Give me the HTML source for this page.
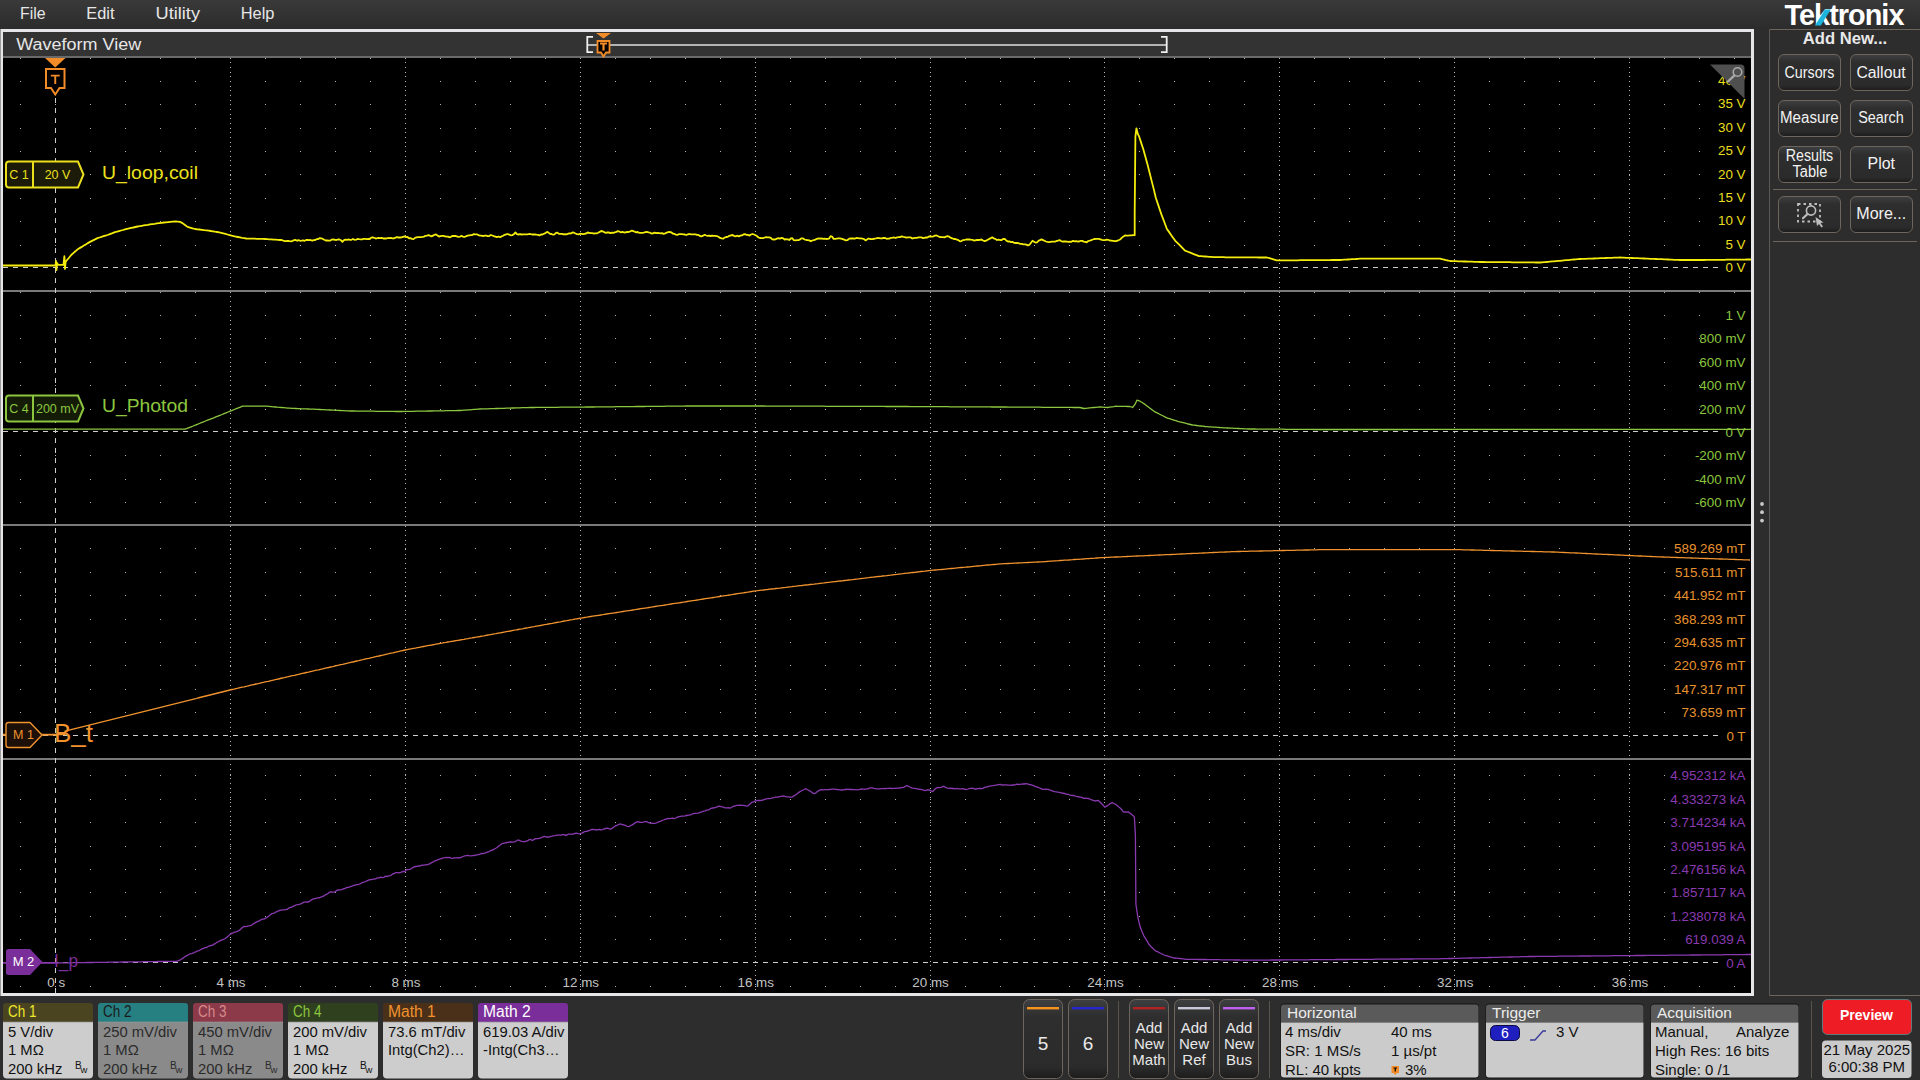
<!DOCTYPE html><html><head><meta charset="utf-8"><style>html,body{margin:0;padding:0;width:1920px;height:1080px;overflow:hidden;background:#2d2d2d}.a{position:absolute}svg text{font-family:"Liberation Sans",sans-serif}</style></head><body><svg class="a" style="left:0;top:0" width="1920" height="1080"><defs><linearGradient id="btn" x1="0" y1="0" x2="0" y2="1"><stop offset="0" stop-color="#3e3f41"/><stop offset="0.22" stop-color="#2e2e2e"/><stop offset="0.85" stop-color="#2b2b2b"/><stop offset="1" stop-color="#1c1c1c"/></linearGradient><linearGradient id="menu" x1="0" y1="0" x2="0" y2="1"><stop offset="0" stop-color="#393939"/><stop offset="1" stop-color="#2c2c2c"/></linearGradient></defs><rect x="0" y="0" width="1920" height="1080" fill="#2d2d2d"/><rect x="0" y="0" width="1920" height="29" fill="url(#menu)"/><text x="20.00" y="19.47" font-size="15.6" fill="#e6e6e6" textLength="25.5" lengthAdjust="spacingAndGlyphs">File</text><text x="86.25" y="19.47" font-size="15.6" fill="#e6e6e6" textLength="28.25" lengthAdjust="spacingAndGlyphs">Edit</text><text x="155.50" y="19.47" font-size="15.6" fill="#e6e6e6" textLength="44.5" lengthAdjust="spacingAndGlyphs">Utility</text><text x="240.75" y="19.47" font-size="15.6" fill="#e6e6e6" textLength="33.75" lengthAdjust="spacingAndGlyphs">Help</text><rect x="0" y="29" width="1754" height="967" fill="#e6e6e8"/><rect x="0" y="29" width="1" height="967" fill="#9a9a9a"/><rect x="3" y="32" width="1748" height="24" fill="#333333"/><rect x="3" y="56" width="1748" height="2" fill="#6a6a6a"/><text x="16.25" y="49.95" font-size="17.3" fill="#e6e6e6" textLength="125" lengthAdjust="spacingAndGlyphs">Waveform View</text><rect x="587" y="44" width="580" height="2" fill="#b4b4b4"/><path d="M593 36.8 H587.3 V52.2 H593" fill="none" stroke="#f0f0f0" stroke-width="1.8"/><path d="M1161 36.8 H1166.7 V52.2 H1161" fill="none" stroke="#f0f0f0" stroke-width="1.8"/><path d="M596 33 H611 L603.5 38.5 Z" fill="#f28c28"/><path d="M597.5 41 H609.5 V52.5 H606 L603.5 56.5 L601 52.5 H597.5 Z" fill="#000" stroke="#f28c28" stroke-width="1.8"/><path d="M600 43.5 H607 M603.5 43.5 V50.5" stroke="#f28c28" stroke-width="2.2"/><path d="M1769.5 995.5 V29.5" fill="none" stroke="#5c5a58" stroke-width="1"/><path d="M1769.5 29.5 H1920" fill="none" stroke="#6e655c" stroke-width="1"/><path d="M1769.5 995.5 H1920" fill="none" stroke="#6e655c" stroke-width="1"/><text x="1784.50" y="25.32" font-size="30" fill="#ffffff" textLength="119" lengthAdjust="spacingAndGlyphs" font-weight="bold" letter-spacing="-1">Tektronix</text><path d="M1815 25.6 L1820.8 25.6 L1830.8 9.4 L1825 9.4 Z" fill="#1cb4dc"/><text x="1845.00" y="44.11" font-size="16.3" fill="#e8e8e8" text-anchor="middle" textLength="84.5" lengthAdjust="spacingAndGlyphs" font-weight="bold">Add New...</text><rect x="1778.5" y="54.5" width="62" height="36" rx="5.5" fill="url(#btn)" stroke="#6e655c" stroke-width="1"/><rect x="1850.5" y="54.5" width="62" height="36" rx="5.5" fill="url(#btn)" stroke="#6e655c" stroke-width="1"/><rect x="1778.5" y="100.5" width="62" height="36" rx="5.5" fill="url(#btn)" stroke="#6e655c" stroke-width="1"/><rect x="1850.5" y="100.5" width="62" height="36" rx="5.5" fill="url(#btn)" stroke="#6e655c" stroke-width="1"/><rect x="1778.5" y="146.5" width="62" height="36" rx="5.5" fill="url(#btn)" stroke="#6e655c" stroke-width="1"/><rect x="1850.5" y="146.5" width="62" height="36" rx="5.5" fill="url(#btn)" stroke="#6e655c" stroke-width="1"/><rect x="1778.5" y="196.5" width="62" height="36" rx="5.5" fill="url(#btn)" stroke="#6e655c" stroke-width="1"/><rect x="1850.5" y="196.5" width="62" height="36" rx="5.5" fill="url(#btn)" stroke="#6e655c" stroke-width="1"/><rect x="1773" y="189" width="144" height="1" fill="#6e655c"/><rect x="1773" y="241" width="144" height="1" fill="#6e655c"/><text x="1809.50" y="77.50" font-size="16" fill="#f2f2f2" text-anchor="middle" textLength="50" lengthAdjust="spacingAndGlyphs">Cursors</text><text x="1881.00" y="77.50" font-size="16" fill="#f2f2f2" text-anchor="middle" textLength="49.25" lengthAdjust="spacingAndGlyphs">Callout</text><text x="1809.40" y="122.90" font-size="16" fill="#f2f2f2" text-anchor="middle" textLength="58.75" lengthAdjust="spacingAndGlyphs">Measure</text><text x="1881.00" y="122.90" font-size="16" fill="#f2f2f2" text-anchor="middle" textLength="45.75" lengthAdjust="spacingAndGlyphs">Search</text><text x="1809.50" y="161.10" font-size="16" fill="#f2f2f2" text-anchor="middle" textLength="47.5" lengthAdjust="spacingAndGlyphs">Results</text><text x="1810.00" y="176.60" font-size="16" fill="#f2f2f2" text-anchor="middle" textLength="35" lengthAdjust="spacingAndGlyphs">Table</text><text x="1881.25" y="168.60" font-size="16" fill="#f2f2f2" text-anchor="middle" textLength="27.5" lengthAdjust="spacingAndGlyphs">Plot</text><text x="1881.25" y="218.60" font-size="16" fill="#f2f2f2" text-anchor="middle" textLength="50" lengthAdjust="spacingAndGlyphs">More...</text><rect x="1798" y="204" width="22" height="17.5" fill="none" stroke="#bdbdbd" stroke-width="1.8" stroke-dasharray="2.5 3"/><circle cx="1811" cy="210.5" r="4.6" fill="none" stroke="#bdbdbd" stroke-width="1.6"/><line x1="1807.5" y1="214" x2="1803" y2="218.2" stroke="#bdbdbd" stroke-width="2.2" stroke-linecap="round"/><path d="M1815.5 217 L1823.5 222.5 L1820.5 223 L1823 226.5 L1821.5 227.5 L1819 224 L1817 226 Z" fill="#bdbdbd"/><path d="M6 1003 H90 Q93 1003 93 1006 V1022 H3 V1006 Q3 1003 6 1003 Z" fill="#4a4420"/><path d="M3 1022 H93 V1074.5 Q93 1078.5 89 1078.5 H7 Q3 1078.5 3 1074.5 Z" fill="#cdcdcd"/><rect x="3" y="1021.5" width="90" height="1.2" fill="#9a9a9a" opacity="0.6"/><text x="8.00" y="1017.17" font-size="15.6" fill="#f0e82a" textLength="28.5" lengthAdjust="spacingAndGlyphs">Ch 1</text><text x="8.00" y="1036.59" font-size="14.8" fill="#111">5 V/div</text><text x="8.00" y="1055.39" font-size="14.8" fill="#111">1 MΩ</text><text x="8.00" y="1074.19" font-size="14.8" fill="#111">200 kHz</text><text x="75.00" y="1069.44" font-size="10" fill="#111">B</text><text x="80.50" y="1072.77" font-size="9.5" fill="#111">w</text><path d="M101 1003 H185 Q188 1003 188 1006 V1022 H98 V1006 Q98 1003 101 1003 Z" fill="#267f80"/><path d="M98 1022 H188 V1074.5 Q188 1078.5 184 1078.5 H102 Q98 1078.5 98 1074.5 Z" fill="#8a8a8a"/><rect x="98" y="1021.5" width="90" height="1.2" fill="#9a9a9a" opacity="0.6"/><text x="103.00" y="1017.17" font-size="15.6" fill="#1a1a1a" textLength="28.5" lengthAdjust="spacingAndGlyphs">Ch 2</text><text x="103.00" y="1036.59" font-size="14.8" fill="#2a2a2a">250 mV/div</text><text x="103.00" y="1055.39" font-size="14.8" fill="#2a2a2a">1 MΩ</text><text x="103.00" y="1074.19" font-size="14.8" fill="#2a2a2a">200 kHz</text><text x="170.00" y="1069.44" font-size="10" fill="#2a2a2a">B</text><text x="175.50" y="1072.77" font-size="9.5" fill="#2a2a2a">w</text><path d="M196 1003 H280 Q283 1003 283 1006 V1022 H193 V1006 Q193 1003 196 1003 Z" fill="#8c3a4a"/><path d="M193 1022 H283 V1074.5 Q283 1078.5 279 1078.5 H197 Q193 1078.5 193 1074.5 Z" fill="#8a8a8a"/><rect x="193" y="1021.5" width="90" height="1.2" fill="#9a9a9a" opacity="0.6"/><text x="198.00" y="1017.17" font-size="15.6" fill="#d88a8a" textLength="28.5" lengthAdjust="spacingAndGlyphs">Ch 3</text><text x="198.00" y="1036.59" font-size="14.8" fill="#2a2a2a">450 mV/div</text><text x="198.00" y="1055.39" font-size="14.8" fill="#2a2a2a">1 MΩ</text><text x="198.00" y="1074.19" font-size="14.8" fill="#2a2a2a">200 kHz</text><text x="265.00" y="1069.44" font-size="10" fill="#2a2a2a">B</text><text x="270.50" y="1072.77" font-size="9.5" fill="#2a2a2a">w</text><path d="M291 1003 H375 Q378 1003 378 1006 V1022 H288 V1006 Q288 1003 291 1003 Z" fill="#2f401e"/><path d="M288 1022 H378 V1074.5 Q378 1078.5 374 1078.5 H292 Q288 1078.5 288 1074.5 Z" fill="#cdcdcd"/><rect x="288" y="1021.5" width="90" height="1.2" fill="#9a9a9a" opacity="0.6"/><text x="293.00" y="1017.17" font-size="15.6" fill="#8cc63f" textLength="28.5" lengthAdjust="spacingAndGlyphs">Ch 4</text><text x="293.00" y="1036.59" font-size="14.8" fill="#111">200 mV/div</text><text x="293.00" y="1055.39" font-size="14.8" fill="#111">1 MΩ</text><text x="293.00" y="1074.19" font-size="14.8" fill="#111">200 kHz</text><text x="360.00" y="1069.44" font-size="10" fill="#111">B</text><text x="365.50" y="1072.77" font-size="9.5" fill="#111">w</text><path d="M386 1003 H470 Q473 1003 473 1006 V1022 H383 V1006 Q383 1003 386 1003 Z" fill="#4a3018"/><path d="M383 1022 H473 V1074.5 Q473 1078.5 469 1078.5 H387 Q383 1078.5 383 1074.5 Z" fill="#cdcdcd"/><rect x="383" y="1021.5" width="90" height="1.2" fill="#9a9a9a" opacity="0.6"/><text x="388.00" y="1017.17" font-size="15.6" fill="#f0922e" textLength="47.8" lengthAdjust="spacingAndGlyphs">Math 1</text><text x="388.00" y="1036.59" font-size="14.8" fill="#111">73.6 mT/div</text><text x="388.00" y="1055.39" font-size="14.8" fill="#111">Intg(Ch2)…</text><path d="M481 1003 H565 Q568 1003 568 1006 V1022 H478 V1006 Q478 1003 481 1003 Z" fill="#7a2e9a"/><path d="M478 1022 H568 V1074.5 Q568 1078.5 564 1078.5 H482 Q478 1078.5 478 1074.5 Z" fill="#cdcdcd"/><rect x="478" y="1021.5" width="90" height="1.2" fill="#9a9a9a" opacity="0.6"/><text x="483.00" y="1017.17" font-size="15.6" fill="#ffffff" textLength="47.8" lengthAdjust="spacingAndGlyphs">Math 2</text><text x="483.00" y="1036.59" font-size="14.8" fill="#111">619.03 A/div</text><text x="483.00" y="1055.39" font-size="14.8" fill="#111">-Intg(Ch3…</text><rect x="1023.5" y="999.5" width="39" height="79" rx="6" fill="url(#btn)" stroke="#6e655c" stroke-width="1"/><rect x="1027" y="1007" width="32" height="2.4" fill="#f7941e"/><rect x="1068.5" y="999.5" width="39" height="79" rx="6" fill="url(#btn)" stroke="#6e655c" stroke-width="1"/><rect x="1072" y="1007" width="32" height="2.4" fill="#2626d0"/><rect x="1129.5" y="999.5" width="39" height="79" rx="6" fill="url(#btn)" stroke="#6e655c" stroke-width="1"/><rect x="1133" y="1007" width="32" height="2.4" fill="#b22222"/><rect x="1174.5" y="999.5" width="39" height="79" rx="6" fill="url(#btn)" stroke="#6e655c" stroke-width="1"/><rect x="1178" y="1007" width="32" height="2.4" fill="#c8c8d8"/><rect x="1219.5" y="999.5" width="39" height="79" rx="6" fill="url(#btn)" stroke="#6e655c" stroke-width="1"/><rect x="1223" y="1007" width="32" height="2.4" fill="#c060f0"/><rect x="1118" y="1001" width="1" height="77" fill="#5a544e"/><rect x="1269" y="1001" width="1" height="77" fill="#5a544e"/><rect x="1811" y="1001" width="1" height="77" fill="#5a544e"/><text x="1043.00" y="1049.54" font-size="19" fill="#e8e8e8" text-anchor="middle">5</text><text x="1088.00" y="1049.54" font-size="19" fill="#e8e8e8" text-anchor="middle">6</text><text x="1149.00" y="1032.66" font-size="15" fill="#e8e8e8" text-anchor="middle">Add</text><text x="1149.00" y="1048.76" font-size="15" fill="#e8e8e8" text-anchor="middle">New</text><text x="1149.00" y="1064.86" font-size="15" fill="#e8e8e8" text-anchor="middle">Math</text><text x="1194.00" y="1032.66" font-size="15" fill="#e8e8e8" text-anchor="middle">Add</text><text x="1194.00" y="1048.76" font-size="15" fill="#e8e8e8" text-anchor="middle">New</text><text x="1194.00" y="1064.86" font-size="15" fill="#e8e8e8" text-anchor="middle">Ref</text><text x="1239.00" y="1032.66" font-size="15" fill="#e8e8e8" text-anchor="middle">Add</text><text x="1239.00" y="1048.76" font-size="15" fill="#e8e8e8" text-anchor="middle">New</text><text x="1239.00" y="1064.86" font-size="15" fill="#e8e8e8" text-anchor="middle">Bus</text><rect x="1280.5" y="1003.5" width="198.5" height="75" rx="4" fill="#151515"/><path d="M1284 1004.5 H1475.5 Q1478.5 1004.5 1478.5 1007.5 V1022.5 H1281 V1007.5 Q1281 1004.5 1284 1004.5 Z" fill="#5a5a5a"/><path d="M1281 1022.5 H1478.5 V1074.5 Q1478.5 1077.5 1475.5 1077.5 H1284 Q1281 1077.5 1281 1074.5 Z" fill="#cbcbcb"/><text x="1287.00" y="1017.83" font-size="15.5" fill="#ececec">Horizontal</text><rect x="1485.5" y="1003.5" width="158.5" height="75" rx="4" fill="#151515"/><path d="M1489 1004.5 H1640.5 Q1643.5 1004.5 1643.5 1007.5 V1022.5 H1486 V1007.5 Q1486 1004.5 1489 1004.5 Z" fill="#5a5a5a"/><path d="M1486 1022.5 H1643.5 V1074.5 Q1643.5 1077.5 1640.5 1077.5 H1489 Q1486 1077.5 1486 1074.5 Z" fill="#cbcbcb"/><text x="1492.00" y="1017.83" font-size="15.5" fill="#ececec">Trigger</text><rect x="1650.5" y="1003.5" width="148.5" height="75" rx="4" fill="#151515"/><path d="M1654 1004.5 H1795.5 Q1798.5 1004.5 1798.5 1007.5 V1022.5 H1651 V1007.5 Q1651 1004.5 1654 1004.5 Z" fill="#5a5a5a"/><path d="M1651 1022.5 H1798.5 V1074.5 Q1798.5 1077.5 1795.5 1077.5 H1654 Q1651 1077.5 1651 1074.5 Z" fill="#cbcbcb"/><text x="1657.00" y="1017.83" font-size="15.5" fill="#ececec">Acquisition</text><text x="1285.00" y="1036.66" font-size="15" fill="#111111">4 ms/div</text><text x="1391.00" y="1036.66" font-size="15" fill="#111111">40 ms</text><text x="1285.00" y="1055.66" font-size="15" fill="#111111">SR: 1 MS/s</text><text x="1391.00" y="1055.66" font-size="15" fill="#111111">1 µs/pt</text><text x="1285.00" y="1074.66" font-size="15" fill="#111111">RL: 40 kpts</text><path d="M1391.5 1066 H1399 V1073 H1397 L1395.25 1075 L1393.5 1073 H1391.5 Z" fill="#f28c28"/><path d="M1393.5 1068 H1397 M1395.25 1068 V1071.5" stroke="#000" stroke-width="1.2"/><text x="1405.00" y="1074.66" font-size="15" fill="#111111">3%</text><rect x="1490.5" y="1025.5" width="29" height="15" rx="5" fill="#1f1fbf" stroke="#0a0a40" stroke-width="1"/><text x="1505.00" y="1037.82" font-size="14" fill="#ffffff" text-anchor="middle">6</text><path d="M1530 1040 H1535 L1543 1031 H1546" fill="none" stroke="#3a3a9a" stroke-width="1.3"/><text x="1556.00" y="1036.66" font-size="15" fill="#111111">3 V</text><text x="1655.00" y="1036.66" font-size="15" fill="#111111">Manual,</text><text x="1736.00" y="1036.66" font-size="15" fill="#111111">Analyze</text><text x="1655.00" y="1055.66" font-size="15" fill="#111111">High Res: 16 bits</text><text x="1655.00" y="1074.66" font-size="15" fill="#111111">Single: 0 /1</text><rect x="1822.5" y="999.5" width="89" height="35" rx="5" fill="#ee1c25" stroke="#5f7a7a" stroke-width="1"/><text x="1866.50" y="1020.32" font-size="14" fill="#ffffff" text-anchor="middle" font-weight="bold">Preview</text><rect x="1822" y="1040.5" width="89.5" height="37.5" rx="4" fill="#cbcbcb"/><text x="1866.75" y="1055.16" font-size="15" fill="#111111" text-anchor="middle">21 May 2025</text><text x="1866.75" y="1071.66" font-size="15" fill="#111111" text-anchor="middle">6:00:38 PM</text><rect x="3" y="58" width="1748" height="935" fill="#000"/><path d="M20 58h1 M55 58h1 M90 58h1 M125 58h1 M160 58h1 M195 58h1 M230 58h1 M265 58h1 M300 58h1 M335 58h1 M370 58h1 M405 58h1 M440 58h1 M475 58h1 M510 58h1 M545 58h1 M580 58h1 M615 58h1 M650 58h1 M685 58h1 M720 58h1 M755 58h1 M790 58h1 M825 58h1 M860 58h1 M895 58h1 M930 58h1 M965 58h1 M1000 58h1 M1034 58h1 M1069 58h1 M1104 58h1 M1139 58h1 M1174 58h1 M1209 58h1 M1244 58h1 M1279 58h1 M1314 58h1 M1349 58h1 M1384 58h1 M1419 58h1 M1454 58h1 M1489 58h1 M1524 58h1 M1559 58h1 M1594 58h1 M1629 58h1 M1664 58h1 M1699 58h1 M1734 58h1 M20 81h1 M55 81h1 M90 81h1 M125 81h1 M160 81h1 M195 81h1 M230 81h1 M265 81h1 M300 81h1 M335 81h1 M370 81h1 M405 81h1 M440 81h1 M475 81h1 M510 81h1 M545 81h1 M580 81h1 M615 81h1 M650 81h1 M685 81h1 M720 81h1 M755 81h1 M790 81h1 M825 81h1 M860 81h1 M895 81h1 M930 81h1 M965 81h1 M1000 81h1 M1034 81h1 M1069 81h1 M1104 81h1 M1139 81h1 M1174 81h1 M1209 81h1 M1244 81h1 M1279 81h1 M1314 81h1 M1349 81h1 M1384 81h1 M1419 81h1 M1454 81h1 M1489 81h1 M1524 81h1 M1559 81h1 M1594 81h1 M1629 81h1 M1664 81h1 M1699 81h1 M1734 81h1 M20 104h1 M55 104h1 M90 104h1 M125 104h1 M160 104h1 M195 104h1 M230 104h1 M265 104h1 M300 104h1 M335 104h1 M370 104h1 M405 104h1 M440 104h1 M475 104h1 M510 104h1 M545 104h1 M580 104h1 M615 104h1 M650 104h1 M685 104h1 M720 104h1 M755 104h1 M790 104h1 M825 104h1 M860 104h1 M895 104h1 M930 104h1 M965 104h1 M1000 104h1 M1034 104h1 M1069 104h1 M1104 104h1 M1139 104h1 M1174 104h1 M1209 104h1 M1244 104h1 M1279 104h1 M1314 104h1 M1349 104h1 M1384 104h1 M1419 104h1 M1454 104h1 M1489 104h1 M1524 104h1 M1559 104h1 M1594 104h1 M1629 104h1 M1664 104h1 M1699 104h1 M1734 104h1 M20 128h1 M55 128h1 M90 128h1 M125 128h1 M160 128h1 M195 128h1 M230 128h1 M265 128h1 M300 128h1 M335 128h1 M370 128h1 M405 128h1 M440 128h1 M475 128h1 M510 128h1 M545 128h1 M580 128h1 M615 128h1 M650 128h1 M685 128h1 M720 128h1 M755 128h1 M790 128h1 M825 128h1 M860 128h1 M895 128h1 M930 128h1 M965 128h1 M1000 128h1 M1034 128h1 M1069 128h1 M1104 128h1 M1139 128h1 M1174 128h1 M1209 128h1 M1244 128h1 M1279 128h1 M1314 128h1 M1349 128h1 M1384 128h1 M1419 128h1 M1454 128h1 M1489 128h1 M1524 128h1 M1559 128h1 M1594 128h1 M1629 128h1 M1664 128h1 M1699 128h1 M1734 128h1 M20 151h1 M55 151h1 M90 151h1 M125 151h1 M160 151h1 M195 151h1 M230 151h1 M265 151h1 M300 151h1 M335 151h1 M370 151h1 M405 151h1 M440 151h1 M475 151h1 M510 151h1 M545 151h1 M580 151h1 M615 151h1 M650 151h1 M685 151h1 M720 151h1 M755 151h1 M790 151h1 M825 151h1 M860 151h1 M895 151h1 M930 151h1 M965 151h1 M1000 151h1 M1034 151h1 M1069 151h1 M1104 151h1 M1139 151h1 M1174 151h1 M1209 151h1 M1244 151h1 M1279 151h1 M1314 151h1 M1349 151h1 M1384 151h1 M1419 151h1 M1454 151h1 M1489 151h1 M1524 151h1 M1559 151h1 M1594 151h1 M1629 151h1 M1664 151h1 M1699 151h1 M1734 151h1 M20 174h1 M55 174h1 M90 174h1 M125 174h1 M160 174h1 M195 174h1 M230 174h1 M265 174h1 M300 174h1 M335 174h1 M370 174h1 M405 174h1 M440 174h1 M475 174h1 M510 174h1 M545 174h1 M580 174h1 M615 174h1 M650 174h1 M685 174h1 M720 174h1 M755 174h1 M790 174h1 M825 174h1 M860 174h1 M895 174h1 M930 174h1 M965 174h1 M1000 174h1 M1034 174h1 M1069 174h1 M1104 174h1 M1139 174h1 M1174 174h1 M1209 174h1 M1244 174h1 M1279 174h1 M1314 174h1 M1349 174h1 M1384 174h1 M1419 174h1 M1454 174h1 M1489 174h1 M1524 174h1 M1559 174h1 M1594 174h1 M1629 174h1 M1664 174h1 M1699 174h1 M1734 174h1 M20 198h1 M55 198h1 M90 198h1 M125 198h1 M160 198h1 M195 198h1 M230 198h1 M265 198h1 M300 198h1 M335 198h1 M370 198h1 M405 198h1 M440 198h1 M475 198h1 M510 198h1 M545 198h1 M580 198h1 M615 198h1 M650 198h1 M685 198h1 M720 198h1 M755 198h1 M790 198h1 M825 198h1 M860 198h1 M895 198h1 M930 198h1 M965 198h1 M1000 198h1 M1034 198h1 M1069 198h1 M1104 198h1 M1139 198h1 M1174 198h1 M1209 198h1 M1244 198h1 M1279 198h1 M1314 198h1 M1349 198h1 M1384 198h1 M1419 198h1 M1454 198h1 M1489 198h1 M1524 198h1 M1559 198h1 M1594 198h1 M1629 198h1 M1664 198h1 M1699 198h1 M1734 198h1 M20 221h1 M55 221h1 M90 221h1 M125 221h1 M160 221h1 M195 221h1 M230 221h1 M265 221h1 M300 221h1 M335 221h1 M370 221h1 M405 221h1 M440 221h1 M475 221h1 M510 221h1 M545 221h1 M580 221h1 M615 221h1 M650 221h1 M685 221h1 M720 221h1 M755 221h1 M790 221h1 M825 221h1 M860 221h1 M895 221h1 M930 221h1 M965 221h1 M1000 221h1 M1034 221h1 M1069 221h1 M1104 221h1 M1139 221h1 M1174 221h1 M1209 221h1 M1244 221h1 M1279 221h1 M1314 221h1 M1349 221h1 M1384 221h1 M1419 221h1 M1454 221h1 M1489 221h1 M1524 221h1 M1559 221h1 M1594 221h1 M1629 221h1 M1664 221h1 M1699 221h1 M1734 221h1 M20 245h1 M55 245h1 M90 245h1 M125 245h1 M160 245h1 M195 245h1 M230 245h1 M265 245h1 M300 245h1 M335 245h1 M370 245h1 M405 245h1 M440 245h1 M475 245h1 M510 245h1 M545 245h1 M580 245h1 M615 245h1 M650 245h1 M685 245h1 M720 245h1 M755 245h1 M790 245h1 M825 245h1 M860 245h1 M895 245h1 M930 245h1 M965 245h1 M1000 245h1 M1034 245h1 M1069 245h1 M1104 245h1 M1139 245h1 M1174 245h1 M1209 245h1 M1244 245h1 M1279 245h1 M1314 245h1 M1349 245h1 M1384 245h1 M1419 245h1 M1454 245h1 M1489 245h1 M1524 245h1 M1559 245h1 M1594 245h1 M1629 245h1 M1664 245h1 M1699 245h1 M1734 245h1 M20 292h1 M55 292h1 M90 292h1 M125 292h1 M160 292h1 M195 292h1 M230 292h1 M265 292h1 M300 292h1 M335 292h1 M370 292h1 M405 292h1 M440 292h1 M475 292h1 M510 292h1 M545 292h1 M580 292h1 M615 292h1 M650 292h1 M685 292h1 M720 292h1 M755 292h1 M790 292h1 M825 292h1 M860 292h1 M895 292h1 M930 292h1 M965 292h1 M1000 292h1 M1034 292h1 M1069 292h1 M1104 292h1 M1139 292h1 M1174 292h1 M1209 292h1 M1244 292h1 M1279 292h1 M1314 292h1 M1349 292h1 M1384 292h1 M1419 292h1 M1454 292h1 M1489 292h1 M1524 292h1 M1559 292h1 M1594 292h1 M1629 292h1 M1664 292h1 M1699 292h1 M1734 292h1 M20 315h1 M55 315h1 M90 315h1 M125 315h1 M160 315h1 M195 315h1 M230 315h1 M265 315h1 M300 315h1 M335 315h1 M370 315h1 M405 315h1 M440 315h1 M475 315h1 M510 315h1 M545 315h1 M580 315h1 M615 315h1 M650 315h1 M685 315h1 M720 315h1 M755 315h1 M790 315h1 M825 315h1 M860 315h1 M895 315h1 M930 315h1 M965 315h1 M1000 315h1 M1034 315h1 M1069 315h1 M1104 315h1 M1139 315h1 M1174 315h1 M1209 315h1 M1244 315h1 M1279 315h1 M1314 315h1 M1349 315h1 M1384 315h1 M1419 315h1 M1454 315h1 M1489 315h1 M1524 315h1 M1559 315h1 M1594 315h1 M1629 315h1 M1664 315h1 M1699 315h1 M1734 315h1 M20 338h1 M55 338h1 M90 338h1 M125 338h1 M160 338h1 M195 338h1 M230 338h1 M265 338h1 M300 338h1 M335 338h1 M370 338h1 M405 338h1 M440 338h1 M475 338h1 M510 338h1 M545 338h1 M580 338h1 M615 338h1 M650 338h1 M685 338h1 M720 338h1 M755 338h1 M790 338h1 M825 338h1 M860 338h1 M895 338h1 M930 338h1 M965 338h1 M1000 338h1 M1034 338h1 M1069 338h1 M1104 338h1 M1139 338h1 M1174 338h1 M1209 338h1 M1244 338h1 M1279 338h1 M1314 338h1 M1349 338h1 M1384 338h1 M1419 338h1 M1454 338h1 M1489 338h1 M1524 338h1 M1559 338h1 M1594 338h1 M1629 338h1 M1664 338h1 M1699 338h1 M1734 338h1 M20 362h1 M55 362h1 M90 362h1 M125 362h1 M160 362h1 M195 362h1 M230 362h1 M265 362h1 M300 362h1 M335 362h1 M370 362h1 M405 362h1 M440 362h1 M475 362h1 M510 362h1 M545 362h1 M580 362h1 M615 362h1 M650 362h1 M685 362h1 M720 362h1 M755 362h1 M790 362h1 M825 362h1 M860 362h1 M895 362h1 M930 362h1 M965 362h1 M1000 362h1 M1034 362h1 M1069 362h1 M1104 362h1 M1139 362h1 M1174 362h1 M1209 362h1 M1244 362h1 M1279 362h1 M1314 362h1 M1349 362h1 M1384 362h1 M1419 362h1 M1454 362h1 M1489 362h1 M1524 362h1 M1559 362h1 M1594 362h1 M1629 362h1 M1664 362h1 M1699 362h1 M1734 362h1 M20 385h1 M55 385h1 M90 385h1 M125 385h1 M160 385h1 M195 385h1 M230 385h1 M265 385h1 M300 385h1 M335 385h1 M370 385h1 M405 385h1 M440 385h1 M475 385h1 M510 385h1 M545 385h1 M580 385h1 M615 385h1 M650 385h1 M685 385h1 M720 385h1 M755 385h1 M790 385h1 M825 385h1 M860 385h1 M895 385h1 M930 385h1 M965 385h1 M1000 385h1 M1034 385h1 M1069 385h1 M1104 385h1 M1139 385h1 M1174 385h1 M1209 385h1 M1244 385h1 M1279 385h1 M1314 385h1 M1349 385h1 M1384 385h1 M1419 385h1 M1454 385h1 M1489 385h1 M1524 385h1 M1559 385h1 M1594 385h1 M1629 385h1 M1664 385h1 M1699 385h1 M1734 385h1 M20 409h1 M55 409h1 M90 409h1 M125 409h1 M160 409h1 M195 409h1 M230 409h1 M265 409h1 M300 409h1 M335 409h1 M370 409h1 M405 409h1 M440 409h1 M475 409h1 M510 409h1 M545 409h1 M580 409h1 M615 409h1 M650 409h1 M685 409h1 M720 409h1 M755 409h1 M790 409h1 M825 409h1 M860 409h1 M895 409h1 M930 409h1 M965 409h1 M1000 409h1 M1034 409h1 M1069 409h1 M1104 409h1 M1139 409h1 M1174 409h1 M1209 409h1 M1244 409h1 M1279 409h1 M1314 409h1 M1349 409h1 M1384 409h1 M1419 409h1 M1454 409h1 M1489 409h1 M1524 409h1 M1559 409h1 M1594 409h1 M1629 409h1 M1664 409h1 M1699 409h1 M1734 409h1 M20 455h1 M55 455h1 M90 455h1 M125 455h1 M160 455h1 M195 455h1 M230 455h1 M265 455h1 M300 455h1 M335 455h1 M370 455h1 M405 455h1 M440 455h1 M475 455h1 M510 455h1 M545 455h1 M580 455h1 M615 455h1 M650 455h1 M685 455h1 M720 455h1 M755 455h1 M790 455h1 M825 455h1 M860 455h1 M895 455h1 M930 455h1 M965 455h1 M1000 455h1 M1034 455h1 M1069 455h1 M1104 455h1 M1139 455h1 M1174 455h1 M1209 455h1 M1244 455h1 M1279 455h1 M1314 455h1 M1349 455h1 M1384 455h1 M1419 455h1 M1454 455h1 M1489 455h1 M1524 455h1 M1559 455h1 M1594 455h1 M1629 455h1 M1664 455h1 M1699 455h1 M1734 455h1 M20 479h1 M55 479h1 M90 479h1 M125 479h1 M160 479h1 M195 479h1 M230 479h1 M265 479h1 M300 479h1 M335 479h1 M370 479h1 M405 479h1 M440 479h1 M475 479h1 M510 479h1 M545 479h1 M580 479h1 M615 479h1 M650 479h1 M685 479h1 M720 479h1 M755 479h1 M790 479h1 M825 479h1 M860 479h1 M895 479h1 M930 479h1 M965 479h1 M1000 479h1 M1034 479h1 M1069 479h1 M1104 479h1 M1139 479h1 M1174 479h1 M1209 479h1 M1244 479h1 M1279 479h1 M1314 479h1 M1349 479h1 M1384 479h1 M1419 479h1 M1454 479h1 M1489 479h1 M1524 479h1 M1559 479h1 M1594 479h1 M1629 479h1 M1664 479h1 M1699 479h1 M1734 479h1 M20 502h1 M55 502h1 M90 502h1 M125 502h1 M160 502h1 M195 502h1 M230 502h1 M265 502h1 M300 502h1 M335 502h1 M370 502h1 M405 502h1 M440 502h1 M475 502h1 M510 502h1 M545 502h1 M580 502h1 M615 502h1 M650 502h1 M685 502h1 M720 502h1 M755 502h1 M790 502h1 M825 502h1 M860 502h1 M895 502h1 M930 502h1 M965 502h1 M1000 502h1 M1034 502h1 M1069 502h1 M1104 502h1 M1139 502h1 M1174 502h1 M1209 502h1 M1244 502h1 M1279 502h1 M1314 502h1 M1349 502h1 M1384 502h1 M1419 502h1 M1454 502h1 M1489 502h1 M1524 502h1 M1559 502h1 M1594 502h1 M1629 502h1 M1664 502h1 M1699 502h1 M1734 502h1 M20 525h1 M55 525h1 M90 525h1 M125 525h1 M160 525h1 M195 525h1 M230 525h1 M265 525h1 M300 525h1 M335 525h1 M370 525h1 M405 525h1 M440 525h1 M475 525h1 M510 525h1 M545 525h1 M580 525h1 M615 525h1 M650 525h1 M685 525h1 M720 525h1 M755 525h1 M790 525h1 M825 525h1 M860 525h1 M895 525h1 M930 525h1 M965 525h1 M1000 525h1 M1034 525h1 M1069 525h1 M1104 525h1 M1139 525h1 M1174 525h1 M1209 525h1 M1244 525h1 M1279 525h1 M1314 525h1 M1349 525h1 M1384 525h1 M1419 525h1 M1454 525h1 M1489 525h1 M1524 525h1 M1559 525h1 M1594 525h1 M1629 525h1 M1664 525h1 M1699 525h1 M1734 525h1 M20 548h1 M55 548h1 M90 548h1 M125 548h1 M160 548h1 M195 548h1 M230 548h1 M265 548h1 M300 548h1 M335 548h1 M370 548h1 M405 548h1 M440 548h1 M475 548h1 M510 548h1 M545 548h1 M580 548h1 M615 548h1 M650 548h1 M685 548h1 M720 548h1 M755 548h1 M790 548h1 M825 548h1 M860 548h1 M895 548h1 M930 548h1 M965 548h1 M1000 548h1 M1034 548h1 M1069 548h1 M1104 548h1 M1139 548h1 M1174 548h1 M1209 548h1 M1244 548h1 M1279 548h1 M1314 548h1 M1349 548h1 M1384 548h1 M1419 548h1 M1454 548h1 M1489 548h1 M1524 548h1 M1559 548h1 M1594 548h1 M1629 548h1 M1664 548h1 M1699 548h1 M1734 548h1 M20 572h1 M55 572h1 M90 572h1 M125 572h1 M160 572h1 M195 572h1 M230 572h1 M265 572h1 M300 572h1 M335 572h1 M370 572h1 M405 572h1 M440 572h1 M475 572h1 M510 572h1 M545 572h1 M580 572h1 M615 572h1 M650 572h1 M685 572h1 M720 572h1 M755 572h1 M790 572h1 M825 572h1 M860 572h1 M895 572h1 M930 572h1 M965 572h1 M1000 572h1 M1034 572h1 M1069 572h1 M1104 572h1 M1139 572h1 M1174 572h1 M1209 572h1 M1244 572h1 M1279 572h1 M1314 572h1 M1349 572h1 M1384 572h1 M1419 572h1 M1454 572h1 M1489 572h1 M1524 572h1 M1559 572h1 M1594 572h1 M1629 572h1 M1664 572h1 M1699 572h1 M1734 572h1 M20 595h1 M55 595h1 M90 595h1 M125 595h1 M160 595h1 M195 595h1 M230 595h1 M265 595h1 M300 595h1 M335 595h1 M370 595h1 M405 595h1 M440 595h1 M475 595h1 M510 595h1 M545 595h1 M580 595h1 M615 595h1 M650 595h1 M685 595h1 M720 595h1 M755 595h1 M790 595h1 M825 595h1 M860 595h1 M895 595h1 M930 595h1 M965 595h1 M1000 595h1 M1034 595h1 M1069 595h1 M1104 595h1 M1139 595h1 M1174 595h1 M1209 595h1 M1244 595h1 M1279 595h1 M1314 595h1 M1349 595h1 M1384 595h1 M1419 595h1 M1454 595h1 M1489 595h1 M1524 595h1 M1559 595h1 M1594 595h1 M1629 595h1 M1664 595h1 M1699 595h1 M1734 595h1 M20 619h1 M55 619h1 M90 619h1 M125 619h1 M160 619h1 M195 619h1 M230 619h1 M265 619h1 M300 619h1 M335 619h1 M370 619h1 M405 619h1 M440 619h1 M475 619h1 M510 619h1 M545 619h1 M580 619h1 M615 619h1 M650 619h1 M685 619h1 M720 619h1 M755 619h1 M790 619h1 M825 619h1 M860 619h1 M895 619h1 M930 619h1 M965 619h1 M1000 619h1 M1034 619h1 M1069 619h1 M1104 619h1 M1139 619h1 M1174 619h1 M1209 619h1 M1244 619h1 M1279 619h1 M1314 619h1 M1349 619h1 M1384 619h1 M1419 619h1 M1454 619h1 M1489 619h1 M1524 619h1 M1559 619h1 M1594 619h1 M1629 619h1 M1664 619h1 M1699 619h1 M1734 619h1 M20 642h1 M55 642h1 M90 642h1 M125 642h1 M160 642h1 M195 642h1 M230 642h1 M265 642h1 M300 642h1 M335 642h1 M370 642h1 M405 642h1 M440 642h1 M475 642h1 M510 642h1 M545 642h1 M580 642h1 M615 642h1 M650 642h1 M685 642h1 M720 642h1 M755 642h1 M790 642h1 M825 642h1 M860 642h1 M895 642h1 M930 642h1 M965 642h1 M1000 642h1 M1034 642h1 M1069 642h1 M1104 642h1 M1139 642h1 M1174 642h1 M1209 642h1 M1244 642h1 M1279 642h1 M1314 642h1 M1349 642h1 M1384 642h1 M1419 642h1 M1454 642h1 M1489 642h1 M1524 642h1 M1559 642h1 M1594 642h1 M1629 642h1 M1664 642h1 M1699 642h1 M1734 642h1 M20 665h1 M55 665h1 M90 665h1 M125 665h1 M160 665h1 M195 665h1 M230 665h1 M265 665h1 M300 665h1 M335 665h1 M370 665h1 M405 665h1 M440 665h1 M475 665h1 M510 665h1 M545 665h1 M580 665h1 M615 665h1 M650 665h1 M685 665h1 M720 665h1 M755 665h1 M790 665h1 M825 665h1 M860 665h1 M895 665h1 M930 665h1 M965 665h1 M1000 665h1 M1034 665h1 M1069 665h1 M1104 665h1 M1139 665h1 M1174 665h1 M1209 665h1 M1244 665h1 M1279 665h1 M1314 665h1 M1349 665h1 M1384 665h1 M1419 665h1 M1454 665h1 M1489 665h1 M1524 665h1 M1559 665h1 M1594 665h1 M1629 665h1 M1664 665h1 M1699 665h1 M1734 665h1 M20 689h1 M55 689h1 M90 689h1 M125 689h1 M160 689h1 M195 689h1 M230 689h1 M265 689h1 M300 689h1 M335 689h1 M370 689h1 M405 689h1 M440 689h1 M475 689h1 M510 689h1 M545 689h1 M580 689h1 M615 689h1 M650 689h1 M685 689h1 M720 689h1 M755 689h1 M790 689h1 M825 689h1 M860 689h1 M895 689h1 M930 689h1 M965 689h1 M1000 689h1 M1034 689h1 M1069 689h1 M1104 689h1 M1139 689h1 M1174 689h1 M1209 689h1 M1244 689h1 M1279 689h1 M1314 689h1 M1349 689h1 M1384 689h1 M1419 689h1 M1454 689h1 M1489 689h1 M1524 689h1 M1559 689h1 M1594 689h1 M1629 689h1 M1664 689h1 M1699 689h1 M1734 689h1 M20 712h1 M55 712h1 M90 712h1 M125 712h1 M160 712h1 M195 712h1 M230 712h1 M265 712h1 M300 712h1 M335 712h1 M370 712h1 M405 712h1 M440 712h1 M475 712h1 M510 712h1 M545 712h1 M580 712h1 M615 712h1 M650 712h1 M685 712h1 M720 712h1 M755 712h1 M790 712h1 M825 712h1 M860 712h1 M895 712h1 M930 712h1 M965 712h1 M1000 712h1 M1034 712h1 M1069 712h1 M1104 712h1 M1139 712h1 M1174 712h1 M1209 712h1 M1244 712h1 M1279 712h1 M1314 712h1 M1349 712h1 M1384 712h1 M1419 712h1 M1454 712h1 M1489 712h1 M1524 712h1 M1559 712h1 M1594 712h1 M1629 712h1 M1664 712h1 M1699 712h1 M1734 712h1 M20 775h1 M55 775h1 M90 775h1 M125 775h1 M160 775h1 M195 775h1 M230 775h1 M265 775h1 M300 775h1 M335 775h1 M370 775h1 M405 775h1 M440 775h1 M475 775h1 M510 775h1 M545 775h1 M580 775h1 M615 775h1 M650 775h1 M685 775h1 M720 775h1 M755 775h1 M790 775h1 M825 775h1 M860 775h1 M895 775h1 M930 775h1 M965 775h1 M1000 775h1 M1034 775h1 M1069 775h1 M1104 775h1 M1139 775h1 M1174 775h1 M1209 775h1 M1244 775h1 M1279 775h1 M1314 775h1 M1349 775h1 M1384 775h1 M1419 775h1 M1454 775h1 M1489 775h1 M1524 775h1 M1559 775h1 M1594 775h1 M1629 775h1 M1664 775h1 M1699 775h1 M1734 775h1 M20 799h1 M55 799h1 M90 799h1 M125 799h1 M160 799h1 M195 799h1 M230 799h1 M265 799h1 M300 799h1 M335 799h1 M370 799h1 M405 799h1 M440 799h1 M475 799h1 M510 799h1 M545 799h1 M580 799h1 M615 799h1 M650 799h1 M685 799h1 M720 799h1 M755 799h1 M790 799h1 M825 799h1 M860 799h1 M895 799h1 M930 799h1 M965 799h1 M1000 799h1 M1034 799h1 M1069 799h1 M1104 799h1 M1139 799h1 M1174 799h1 M1209 799h1 M1244 799h1 M1279 799h1 M1314 799h1 M1349 799h1 M1384 799h1 M1419 799h1 M1454 799h1 M1489 799h1 M1524 799h1 M1559 799h1 M1594 799h1 M1629 799h1 M1664 799h1 M1699 799h1 M1734 799h1 M20 822h1 M55 822h1 M90 822h1 M125 822h1 M160 822h1 M195 822h1 M230 822h1 M265 822h1 M300 822h1 M335 822h1 M370 822h1 M405 822h1 M440 822h1 M475 822h1 M510 822h1 M545 822h1 M580 822h1 M615 822h1 M650 822h1 M685 822h1 M720 822h1 M755 822h1 M790 822h1 M825 822h1 M860 822h1 M895 822h1 M930 822h1 M965 822h1 M1000 822h1 M1034 822h1 M1069 822h1 M1104 822h1 M1139 822h1 M1174 822h1 M1209 822h1 M1244 822h1 M1279 822h1 M1314 822h1 M1349 822h1 M1384 822h1 M1419 822h1 M1454 822h1 M1489 822h1 M1524 822h1 M1559 822h1 M1594 822h1 M1629 822h1 M1664 822h1 M1699 822h1 M1734 822h1 M20 846h1 M55 846h1 M90 846h1 M125 846h1 M160 846h1 M195 846h1 M230 846h1 M265 846h1 M300 846h1 M335 846h1 M370 846h1 M405 846h1 M440 846h1 M475 846h1 M510 846h1 M545 846h1 M580 846h1 M615 846h1 M650 846h1 M685 846h1 M720 846h1 M755 846h1 M790 846h1 M825 846h1 M860 846h1 M895 846h1 M930 846h1 M965 846h1 M1000 846h1 M1034 846h1 M1069 846h1 M1104 846h1 M1139 846h1 M1174 846h1 M1209 846h1 M1244 846h1 M1279 846h1 M1314 846h1 M1349 846h1 M1384 846h1 M1419 846h1 M1454 846h1 M1489 846h1 M1524 846h1 M1559 846h1 M1594 846h1 M1629 846h1 M1664 846h1 M1699 846h1 M1734 846h1 M20 869h1 M55 869h1 M90 869h1 M125 869h1 M160 869h1 M195 869h1 M230 869h1 M265 869h1 M300 869h1 M335 869h1 M370 869h1 M405 869h1 M440 869h1 M475 869h1 M510 869h1 M545 869h1 M580 869h1 M615 869h1 M650 869h1 M685 869h1 M720 869h1 M755 869h1 M790 869h1 M825 869h1 M860 869h1 M895 869h1 M930 869h1 M965 869h1 M1000 869h1 M1034 869h1 M1069 869h1 M1104 869h1 M1139 869h1 M1174 869h1 M1209 869h1 M1244 869h1 M1279 869h1 M1314 869h1 M1349 869h1 M1384 869h1 M1419 869h1 M1454 869h1 M1489 869h1 M1524 869h1 M1559 869h1 M1594 869h1 M1629 869h1 M1664 869h1 M1699 869h1 M1734 869h1 M20 892h1 M55 892h1 M90 892h1 M125 892h1 M160 892h1 M195 892h1 M230 892h1 M265 892h1 M300 892h1 M335 892h1 M370 892h1 M405 892h1 M440 892h1 M475 892h1 M510 892h1 M545 892h1 M580 892h1 M615 892h1 M650 892h1 M685 892h1 M720 892h1 M755 892h1 M790 892h1 M825 892h1 M860 892h1 M895 892h1 M930 892h1 M965 892h1 M1000 892h1 M1034 892h1 M1069 892h1 M1104 892h1 M1139 892h1 M1174 892h1 M1209 892h1 M1244 892h1 M1279 892h1 M1314 892h1 M1349 892h1 M1384 892h1 M1419 892h1 M1454 892h1 M1489 892h1 M1524 892h1 M1559 892h1 M1594 892h1 M1629 892h1 M1664 892h1 M1699 892h1 M1734 892h1 M20 916h1 M55 916h1 M90 916h1 M125 916h1 M160 916h1 M195 916h1 M230 916h1 M265 916h1 M300 916h1 M335 916h1 M370 916h1 M405 916h1 M440 916h1 M475 916h1 M510 916h1 M545 916h1 M580 916h1 M615 916h1 M650 916h1 M685 916h1 M720 916h1 M755 916h1 M790 916h1 M825 916h1 M860 916h1 M895 916h1 M930 916h1 M965 916h1 M1000 916h1 M1034 916h1 M1069 916h1 M1104 916h1 M1139 916h1 M1174 916h1 M1209 916h1 M1244 916h1 M1279 916h1 M1314 916h1 M1349 916h1 M1384 916h1 M1419 916h1 M1454 916h1 M1489 916h1 M1524 916h1 M1559 916h1 M1594 916h1 M1629 916h1 M1664 916h1 M1699 916h1 M1734 916h1 M20 939h1 M55 939h1 M90 939h1 M125 939h1 M160 939h1 M195 939h1 M230 939h1 M265 939h1 M300 939h1 M335 939h1 M370 939h1 M405 939h1 M440 939h1 M475 939h1 M510 939h1 M545 939h1 M580 939h1 M615 939h1 M650 939h1 M685 939h1 M720 939h1 M755 939h1 M790 939h1 M825 939h1 M860 939h1 M895 939h1 M930 939h1 M965 939h1 M1000 939h1 M1034 939h1 M1069 939h1 M1104 939h1 M1139 939h1 M1174 939h1 M1209 939h1 M1244 939h1 M1279 939h1 M1314 939h1 M1349 939h1 M1384 939h1 M1419 939h1 M1454 939h1 M1489 939h1 M1524 939h1 M1559 939h1 M1594 939h1 M1629 939h1 M1664 939h1 M1699 939h1 M1734 939h1 M20 986h1 M55 986h1 M90 986h1 M125 986h1 M160 986h1 M195 986h1 M230 986h1 M265 986h1 M300 986h1 M335 986h1 M370 986h1 M405 986h1 M440 986h1 M475 986h1 M510 986h1 M545 986h1 M580 986h1 M615 986h1 M650 986h1 M685 986h1 M720 986h1 M755 986h1 M790 986h1 M825 986h1 M860 986h1 M895 986h1 M930 986h1 M965 986h1 M1000 986h1 M1034 986h1 M1069 986h1 M1104 986h1 M1139 986h1 M1174 986h1 M1209 986h1 M1244 986h1 M1279 986h1 M1314 986h1 M1349 986h1 M1384 986h1 M1419 986h1 M1454 986h1 M1489 986h1 M1524 986h1 M1559 986h1 M1594 986h1 M1629 986h1 M1664 986h1 M1699 986h1 M1734 986h1" stroke="#b4b4b4" stroke-width="1" shape-rendering="crispEdges" transform="translate(0,0.5)"/><path d="M230 58v1 M230 62v1 M230 67v1 M230 72v1 M230 76v1 M230 81v1 M230 86v1 M230 90v1 M230 95v1 M230 100v1 M230 104v1 M230 109v1 M230 114v1 M230 118v1 M230 123v1 M230 128v1 M230 132v1 M230 137v1 M230 142v1 M230 146v1 M230 151v1 M230 156v1 M230 160v1 M230 165v1 M230 170v1 M230 175v1 M230 179v1 M230 184v1 M230 189v1 M230 193v1 M230 198v1 M230 203v1 M230 207v1 M230 212v1 M230 217v1 M230 221v1 M230 226v1 M230 231v1 M230 235v1 M230 240v1 M230 245v1 M230 249v1 M230 254v1 M230 259v1 M230 263v1 M230 268v1 M230 273v1 M230 277v1 M230 282v1 M230 287v1 M230 292v1 M230 296v1 M230 301v1 M230 306v1 M230 310v1 M230 315v1 M230 320v1 M230 324v1 M230 329v1 M230 334v1 M230 338v1 M230 343v1 M230 348v1 M230 352v1 M230 357v1 M230 362v1 M230 366v1 M230 371v1 M230 376v1 M230 380v1 M230 385v1 M230 390v1 M230 394v1 M230 399v1 M230 404v1 M230 409v1 M230 413v1 M230 418v1 M230 423v1 M230 427v1 M230 432v1 M230 437v1 M230 441v1 M230 446v1 M230 451v1 M230 455v1 M230 460v1 M230 465v1 M230 469v1 M230 474v1 M230 479v1 M230 483v1 M230 488v1 M230 493v1 M230 497v1 M230 502v1 M230 507v1 M230 511v1 M230 516v1 M230 521v1 M230 526v1 M230 530v1 M230 535v1 M230 540v1 M230 544v1 M230 549v1 M230 554v1 M230 558v1 M230 563v1 M230 568v1 M230 572v1 M230 577v1 M230 582v1 M230 586v1 M230 591v1 M230 596v1 M230 600v1 M230 605v1 M230 610v1 M230 614v1 M230 619v1 M230 624v1 M230 628v1 M230 633v1 M230 638v1 M230 642v1 M230 647v1 M230 652v1 M230 657v1 M230 661v1 M230 666v1 M230 671v1 M230 675v1 M230 680v1 M230 685v1 M230 689v1 M230 694v1 M230 699v1 M230 703v1 M230 708v1 M230 713v1 M230 717v1 M230 722v1 M230 727v1 M230 731v1 M230 736v1 M230 741v1 M230 745v1 M230 750v1 M230 755v1 M230 759v1 M230 764v1 M230 769v1 M230 774v1 M230 778v1 M230 783v1 M230 788v1 M230 792v1 M230 797v1 M230 802v1 M230 806v1 M230 811v1 M230 816v1 M230 820v1 M230 825v1 M230 830v1 M230 834v1 M230 839v1 M230 844v1 M230 848v1 M230 853v1 M230 858v1 M230 862v1 M230 867v1 M230 872v1 M230 876v1 M230 881v1 M230 886v1 M230 891v1 M230 895v1 M230 900v1 M230 905v1 M230 909v1 M230 914v1 M230 919v1 M230 923v1 M230 928v1 M230 933v1 M230 937v1 M230 942v1 M230 947v1 M230 951v1 M230 956v1 M230 961v1 M230 965v1 M230 970v1 M230 975v1 M230 979v1 M230 984v1 M230 989v1 M405 58v1 M405 62v1 M405 67v1 M405 72v1 M405 76v1 M405 81v1 M405 86v1 M405 90v1 M405 95v1 M405 100v1 M405 104v1 M405 109v1 M405 114v1 M405 118v1 M405 123v1 M405 128v1 M405 132v1 M405 137v1 M405 142v1 M405 146v1 M405 151v1 M405 156v1 M405 160v1 M405 165v1 M405 170v1 M405 175v1 M405 179v1 M405 184v1 M405 189v1 M405 193v1 M405 198v1 M405 203v1 M405 207v1 M405 212v1 M405 217v1 M405 221v1 M405 226v1 M405 231v1 M405 235v1 M405 240v1 M405 245v1 M405 249v1 M405 254v1 M405 259v1 M405 263v1 M405 268v1 M405 273v1 M405 277v1 M405 282v1 M405 287v1 M405 292v1 M405 296v1 M405 301v1 M405 306v1 M405 310v1 M405 315v1 M405 320v1 M405 324v1 M405 329v1 M405 334v1 M405 338v1 M405 343v1 M405 348v1 M405 352v1 M405 357v1 M405 362v1 M405 366v1 M405 371v1 M405 376v1 M405 380v1 M405 385v1 M405 390v1 M405 394v1 M405 399v1 M405 404v1 M405 409v1 M405 413v1 M405 418v1 M405 423v1 M405 427v1 M405 432v1 M405 437v1 M405 441v1 M405 446v1 M405 451v1 M405 455v1 M405 460v1 M405 465v1 M405 469v1 M405 474v1 M405 479v1 M405 483v1 M405 488v1 M405 493v1 M405 497v1 M405 502v1 M405 507v1 M405 511v1 M405 516v1 M405 521v1 M405 526v1 M405 530v1 M405 535v1 M405 540v1 M405 544v1 M405 549v1 M405 554v1 M405 558v1 M405 563v1 M405 568v1 M405 572v1 M405 577v1 M405 582v1 M405 586v1 M405 591v1 M405 596v1 M405 600v1 M405 605v1 M405 610v1 M405 614v1 M405 619v1 M405 624v1 M405 628v1 M405 633v1 M405 638v1 M405 642v1 M405 647v1 M405 652v1 M405 657v1 M405 661v1 M405 666v1 M405 671v1 M405 675v1 M405 680v1 M405 685v1 M405 689v1 M405 694v1 M405 699v1 M405 703v1 M405 708v1 M405 713v1 M405 717v1 M405 722v1 M405 727v1 M405 731v1 M405 736v1 M405 741v1 M405 745v1 M405 750v1 M405 755v1 M405 759v1 M405 764v1 M405 769v1 M405 774v1 M405 778v1 M405 783v1 M405 788v1 M405 792v1 M405 797v1 M405 802v1 M405 806v1 M405 811v1 M405 816v1 M405 820v1 M405 825v1 M405 830v1 M405 834v1 M405 839v1 M405 844v1 M405 848v1 M405 853v1 M405 858v1 M405 862v1 M405 867v1 M405 872v1 M405 876v1 M405 881v1 M405 886v1 M405 891v1 M405 895v1 M405 900v1 M405 905v1 M405 909v1 M405 914v1 M405 919v1 M405 923v1 M405 928v1 M405 933v1 M405 937v1 M405 942v1 M405 947v1 M405 951v1 M405 956v1 M405 961v1 M405 965v1 M405 970v1 M405 975v1 M405 979v1 M405 984v1 M405 989v1 M580 58v1 M580 62v1 M580 67v1 M580 72v1 M580 76v1 M580 81v1 M580 86v1 M580 90v1 M580 95v1 M580 100v1 M580 104v1 M580 109v1 M580 114v1 M580 118v1 M580 123v1 M580 128v1 M580 132v1 M580 137v1 M580 142v1 M580 146v1 M580 151v1 M580 156v1 M580 160v1 M580 165v1 M580 170v1 M580 175v1 M580 179v1 M580 184v1 M580 189v1 M580 193v1 M580 198v1 M580 203v1 M580 207v1 M580 212v1 M580 217v1 M580 221v1 M580 226v1 M580 231v1 M580 235v1 M580 240v1 M580 245v1 M580 249v1 M580 254v1 M580 259v1 M580 263v1 M580 268v1 M580 273v1 M580 277v1 M580 282v1 M580 287v1 M580 292v1 M580 296v1 M580 301v1 M580 306v1 M580 310v1 M580 315v1 M580 320v1 M580 324v1 M580 329v1 M580 334v1 M580 338v1 M580 343v1 M580 348v1 M580 352v1 M580 357v1 M580 362v1 M580 366v1 M580 371v1 M580 376v1 M580 380v1 M580 385v1 M580 390v1 M580 394v1 M580 399v1 M580 404v1 M580 409v1 M580 413v1 M580 418v1 M580 423v1 M580 427v1 M580 432v1 M580 437v1 M580 441v1 M580 446v1 M580 451v1 M580 455v1 M580 460v1 M580 465v1 M580 469v1 M580 474v1 M580 479v1 M580 483v1 M580 488v1 M580 493v1 M580 497v1 M580 502v1 M580 507v1 M580 511v1 M580 516v1 M580 521v1 M580 526v1 M580 530v1 M580 535v1 M580 540v1 M580 544v1 M580 549v1 M580 554v1 M580 558v1 M580 563v1 M580 568v1 M580 572v1 M580 577v1 M580 582v1 M580 586v1 M580 591v1 M580 596v1 M580 600v1 M580 605v1 M580 610v1 M580 614v1 M580 619v1 M580 624v1 M580 628v1 M580 633v1 M580 638v1 M580 642v1 M580 647v1 M580 652v1 M580 657v1 M580 661v1 M580 666v1 M580 671v1 M580 675v1 M580 680v1 M580 685v1 M580 689v1 M580 694v1 M580 699v1 M580 703v1 M580 708v1 M580 713v1 M580 717v1 M580 722v1 M580 727v1 M580 731v1 M580 736v1 M580 741v1 M580 745v1 M580 750v1 M580 755v1 M580 759v1 M580 764v1 M580 769v1 M580 774v1 M580 778v1 M580 783v1 M580 788v1 M580 792v1 M580 797v1 M580 802v1 M580 806v1 M580 811v1 M580 816v1 M580 820v1 M580 825v1 M580 830v1 M580 834v1 M580 839v1 M580 844v1 M580 848v1 M580 853v1 M580 858v1 M580 862v1 M580 867v1 M580 872v1 M580 876v1 M580 881v1 M580 886v1 M580 891v1 M580 895v1 M580 900v1 M580 905v1 M580 909v1 M580 914v1 M580 919v1 M580 923v1 M580 928v1 M580 933v1 M580 937v1 M580 942v1 M580 947v1 M580 951v1 M580 956v1 M580 961v1 M580 965v1 M580 970v1 M580 975v1 M580 979v1 M580 984v1 M580 989v1 M755 58v1 M755 62v1 M755 67v1 M755 72v1 M755 76v1 M755 81v1 M755 86v1 M755 90v1 M755 95v1 M755 100v1 M755 104v1 M755 109v1 M755 114v1 M755 118v1 M755 123v1 M755 128v1 M755 132v1 M755 137v1 M755 142v1 M755 146v1 M755 151v1 M755 156v1 M755 160v1 M755 165v1 M755 170v1 M755 175v1 M755 179v1 M755 184v1 M755 189v1 M755 193v1 M755 198v1 M755 203v1 M755 207v1 M755 212v1 M755 217v1 M755 221v1 M755 226v1 M755 231v1 M755 235v1 M755 240v1 M755 245v1 M755 249v1 M755 254v1 M755 259v1 M755 263v1 M755 268v1 M755 273v1 M755 277v1 M755 282v1 M755 287v1 M755 292v1 M755 296v1 M755 301v1 M755 306v1 M755 310v1 M755 315v1 M755 320v1 M755 324v1 M755 329v1 M755 334v1 M755 338v1 M755 343v1 M755 348v1 M755 352v1 M755 357v1 M755 362v1 M755 366v1 M755 371v1 M755 376v1 M755 380v1 M755 385v1 M755 390v1 M755 394v1 M755 399v1 M755 404v1 M755 409v1 M755 413v1 M755 418v1 M755 423v1 M755 427v1 M755 432v1 M755 437v1 M755 441v1 M755 446v1 M755 451v1 M755 455v1 M755 460v1 M755 465v1 M755 469v1 M755 474v1 M755 479v1 M755 483v1 M755 488v1 M755 493v1 M755 497v1 M755 502v1 M755 507v1 M755 511v1 M755 516v1 M755 521v1 M755 526v1 M755 530v1 M755 535v1 M755 540v1 M755 544v1 M755 549v1 M755 554v1 M755 558v1 M755 563v1 M755 568v1 M755 572v1 M755 577v1 M755 582v1 M755 586v1 M755 591v1 M755 596v1 M755 600v1 M755 605v1 M755 610v1 M755 614v1 M755 619v1 M755 624v1 M755 628v1 M755 633v1 M755 638v1 M755 642v1 M755 647v1 M755 652v1 M755 657v1 M755 661v1 M755 666v1 M755 671v1 M755 675v1 M755 680v1 M755 685v1 M755 689v1 M755 694v1 M755 699v1 M755 703v1 M755 708v1 M755 713v1 M755 717v1 M755 722v1 M755 727v1 M755 731v1 M755 736v1 M755 741v1 M755 745v1 M755 750v1 M755 755v1 M755 759v1 M755 764v1 M755 769v1 M755 774v1 M755 778v1 M755 783v1 M755 788v1 M755 792v1 M755 797v1 M755 802v1 M755 806v1 M755 811v1 M755 816v1 M755 820v1 M755 825v1 M755 830v1 M755 834v1 M755 839v1 M755 844v1 M755 848v1 M755 853v1 M755 858v1 M755 862v1 M755 867v1 M755 872v1 M755 876v1 M755 881v1 M755 886v1 M755 891v1 M755 895v1 M755 900v1 M755 905v1 M755 909v1 M755 914v1 M755 919v1 M755 923v1 M755 928v1 M755 933v1 M755 937v1 M755 942v1 M755 947v1 M755 951v1 M755 956v1 M755 961v1 M755 965v1 M755 970v1 M755 975v1 M755 979v1 M755 984v1 M755 989v1 M930 58v1 M930 62v1 M930 67v1 M930 72v1 M930 76v1 M930 81v1 M930 86v1 M930 90v1 M930 95v1 M930 100v1 M930 104v1 M930 109v1 M930 114v1 M930 118v1 M930 123v1 M930 128v1 M930 132v1 M930 137v1 M930 142v1 M930 146v1 M930 151v1 M930 156v1 M930 160v1 M930 165v1 M930 170v1 M930 175v1 M930 179v1 M930 184v1 M930 189v1 M930 193v1 M930 198v1 M930 203v1 M930 207v1 M930 212v1 M930 217v1 M930 221v1 M930 226v1 M930 231v1 M930 235v1 M930 240v1 M930 245v1 M930 249v1 M930 254v1 M930 259v1 M930 263v1 M930 268v1 M930 273v1 M930 277v1 M930 282v1 M930 287v1 M930 292v1 M930 296v1 M930 301v1 M930 306v1 M930 310v1 M930 315v1 M930 320v1 M930 324v1 M930 329v1 M930 334v1 M930 338v1 M930 343v1 M930 348v1 M930 352v1 M930 357v1 M930 362v1 M930 366v1 M930 371v1 M930 376v1 M930 380v1 M930 385v1 M930 390v1 M930 394v1 M930 399v1 M930 404v1 M930 409v1 M930 413v1 M930 418v1 M930 423v1 M930 427v1 M930 432v1 M930 437v1 M930 441v1 M930 446v1 M930 451v1 M930 455v1 M930 460v1 M930 465v1 M930 469v1 M930 474v1 M930 479v1 M930 483v1 M930 488v1 M930 493v1 M930 497v1 M930 502v1 M930 507v1 M930 511v1 M930 516v1 M930 521v1 M930 526v1 M930 530v1 M930 535v1 M930 540v1 M930 544v1 M930 549v1 M930 554v1 M930 558v1 M930 563v1 M930 568v1 M930 572v1 M930 577v1 M930 582v1 M930 586v1 M930 591v1 M930 596v1 M930 600v1 M930 605v1 M930 610v1 M930 614v1 M930 619v1 M930 624v1 M930 628v1 M930 633v1 M930 638v1 M930 642v1 M930 647v1 M930 652v1 M930 657v1 M930 661v1 M930 666v1 M930 671v1 M930 675v1 M930 680v1 M930 685v1 M930 689v1 M930 694v1 M930 699v1 M930 703v1 M930 708v1 M930 713v1 M930 717v1 M930 722v1 M930 727v1 M930 731v1 M930 736v1 M930 741v1 M930 745v1 M930 750v1 M930 755v1 M930 759v1 M930 764v1 M930 769v1 M930 774v1 M930 778v1 M930 783v1 M930 788v1 M930 792v1 M930 797v1 M930 802v1 M930 806v1 M930 811v1 M930 816v1 M930 820v1 M930 825v1 M930 830v1 M930 834v1 M930 839v1 M930 844v1 M930 848v1 M930 853v1 M930 858v1 M930 862v1 M930 867v1 M930 872v1 M930 876v1 M930 881v1 M930 886v1 M930 891v1 M930 895v1 M930 900v1 M930 905v1 M930 909v1 M930 914v1 M930 919v1 M930 923v1 M930 928v1 M930 933v1 M930 937v1 M930 942v1 M930 947v1 M930 951v1 M930 956v1 M930 961v1 M930 965v1 M930 970v1 M930 975v1 M930 979v1 M930 984v1 M930 989v1 M1104 58v1 M1104 62v1 M1104 67v1 M1104 72v1 M1104 76v1 M1104 81v1 M1104 86v1 M1104 90v1 M1104 95v1 M1104 100v1 M1104 104v1 M1104 109v1 M1104 114v1 M1104 118v1 M1104 123v1 M1104 128v1 M1104 132v1 M1104 137v1 M1104 142v1 M1104 146v1 M1104 151v1 M1104 156v1 M1104 160v1 M1104 165v1 M1104 170v1 M1104 175v1 M1104 179v1 M1104 184v1 M1104 189v1 M1104 193v1 M1104 198v1 M1104 203v1 M1104 207v1 M1104 212v1 M1104 217v1 M1104 221v1 M1104 226v1 M1104 231v1 M1104 235v1 M1104 240v1 M1104 245v1 M1104 249v1 M1104 254v1 M1104 259v1 M1104 263v1 M1104 268v1 M1104 273v1 M1104 277v1 M1104 282v1 M1104 287v1 M1104 292v1 M1104 296v1 M1104 301v1 M1104 306v1 M1104 310v1 M1104 315v1 M1104 320v1 M1104 324v1 M1104 329v1 M1104 334v1 M1104 338v1 M1104 343v1 M1104 348v1 M1104 352v1 M1104 357v1 M1104 362v1 M1104 366v1 M1104 371v1 M1104 376v1 M1104 380v1 M1104 385v1 M1104 390v1 M1104 394v1 M1104 399v1 M1104 404v1 M1104 409v1 M1104 413v1 M1104 418v1 M1104 423v1 M1104 427v1 M1104 432v1 M1104 437v1 M1104 441v1 M1104 446v1 M1104 451v1 M1104 455v1 M1104 460v1 M1104 465v1 M1104 469v1 M1104 474v1 M1104 479v1 M1104 483v1 M1104 488v1 M1104 493v1 M1104 497v1 M1104 502v1 M1104 507v1 M1104 511v1 M1104 516v1 M1104 521v1 M1104 526v1 M1104 530v1 M1104 535v1 M1104 540v1 M1104 544v1 M1104 549v1 M1104 554v1 M1104 558v1 M1104 563v1 M1104 568v1 M1104 572v1 M1104 577v1 M1104 582v1 M1104 586v1 M1104 591v1 M1104 596v1 M1104 600v1 M1104 605v1 M1104 610v1 M1104 614v1 M1104 619v1 M1104 624v1 M1104 628v1 M1104 633v1 M1104 638v1 M1104 642v1 M1104 647v1 M1104 652v1 M1104 657v1 M1104 661v1 M1104 666v1 M1104 671v1 M1104 675v1 M1104 680v1 M1104 685v1 M1104 689v1 M1104 694v1 M1104 699v1 M1104 703v1 M1104 708v1 M1104 713v1 M1104 717v1 M1104 722v1 M1104 727v1 M1104 731v1 M1104 736v1 M1104 741v1 M1104 745v1 M1104 750v1 M1104 755v1 M1104 759v1 M1104 764v1 M1104 769v1 M1104 774v1 M1104 778v1 M1104 783v1 M1104 788v1 M1104 792v1 M1104 797v1 M1104 802v1 M1104 806v1 M1104 811v1 M1104 816v1 M1104 820v1 M1104 825v1 M1104 830v1 M1104 834v1 M1104 839v1 M1104 844v1 M1104 848v1 M1104 853v1 M1104 858v1 M1104 862v1 M1104 867v1 M1104 872v1 M1104 876v1 M1104 881v1 M1104 886v1 M1104 891v1 M1104 895v1 M1104 900v1 M1104 905v1 M1104 909v1 M1104 914v1 M1104 919v1 M1104 923v1 M1104 928v1 M1104 933v1 M1104 937v1 M1104 942v1 M1104 947v1 M1104 951v1 M1104 956v1 M1104 961v1 M1104 965v1 M1104 970v1 M1104 975v1 M1104 979v1 M1104 984v1 M1104 989v1 M1279 58v1 M1279 62v1 M1279 67v1 M1279 72v1 M1279 76v1 M1279 81v1 M1279 86v1 M1279 90v1 M1279 95v1 M1279 100v1 M1279 104v1 M1279 109v1 M1279 114v1 M1279 118v1 M1279 123v1 M1279 128v1 M1279 132v1 M1279 137v1 M1279 142v1 M1279 146v1 M1279 151v1 M1279 156v1 M1279 160v1 M1279 165v1 M1279 170v1 M1279 175v1 M1279 179v1 M1279 184v1 M1279 189v1 M1279 193v1 M1279 198v1 M1279 203v1 M1279 207v1 M1279 212v1 M1279 217v1 M1279 221v1 M1279 226v1 M1279 231v1 M1279 235v1 M1279 240v1 M1279 245v1 M1279 249v1 M1279 254v1 M1279 259v1 M1279 263v1 M1279 268v1 M1279 273v1 M1279 277v1 M1279 282v1 M1279 287v1 M1279 292v1 M1279 296v1 M1279 301v1 M1279 306v1 M1279 310v1 M1279 315v1 M1279 320v1 M1279 324v1 M1279 329v1 M1279 334v1 M1279 338v1 M1279 343v1 M1279 348v1 M1279 352v1 M1279 357v1 M1279 362v1 M1279 366v1 M1279 371v1 M1279 376v1 M1279 380v1 M1279 385v1 M1279 390v1 M1279 394v1 M1279 399v1 M1279 404v1 M1279 409v1 M1279 413v1 M1279 418v1 M1279 423v1 M1279 427v1 M1279 432v1 M1279 437v1 M1279 441v1 M1279 446v1 M1279 451v1 M1279 455v1 M1279 460v1 M1279 465v1 M1279 469v1 M1279 474v1 M1279 479v1 M1279 483v1 M1279 488v1 M1279 493v1 M1279 497v1 M1279 502v1 M1279 507v1 M1279 511v1 M1279 516v1 M1279 521v1 M1279 526v1 M1279 530v1 M1279 535v1 M1279 540v1 M1279 544v1 M1279 549v1 M1279 554v1 M1279 558v1 M1279 563v1 M1279 568v1 M1279 572v1 M1279 577v1 M1279 582v1 M1279 586v1 M1279 591v1 M1279 596v1 M1279 600v1 M1279 605v1 M1279 610v1 M1279 614v1 M1279 619v1 M1279 624v1 M1279 628v1 M1279 633v1 M1279 638v1 M1279 642v1 M1279 647v1 M1279 652v1 M1279 657v1 M1279 661v1 M1279 666v1 M1279 671v1 M1279 675v1 M1279 680v1 M1279 685v1 M1279 689v1 M1279 694v1 M1279 699v1 M1279 703v1 M1279 708v1 M1279 713v1 M1279 717v1 M1279 722v1 M1279 727v1 M1279 731v1 M1279 736v1 M1279 741v1 M1279 745v1 M1279 750v1 M1279 755v1 M1279 759v1 M1279 764v1 M1279 769v1 M1279 774v1 M1279 778v1 M1279 783v1 M1279 788v1 M1279 792v1 M1279 797v1 M1279 802v1 M1279 806v1 M1279 811v1 M1279 816v1 M1279 820v1 M1279 825v1 M1279 830v1 M1279 834v1 M1279 839v1 M1279 844v1 M1279 848v1 M1279 853v1 M1279 858v1 M1279 862v1 M1279 867v1 M1279 872v1 M1279 876v1 M1279 881v1 M1279 886v1 M1279 891v1 M1279 895v1 M1279 900v1 M1279 905v1 M1279 909v1 M1279 914v1 M1279 919v1 M1279 923v1 M1279 928v1 M1279 933v1 M1279 937v1 M1279 942v1 M1279 947v1 M1279 951v1 M1279 956v1 M1279 961v1 M1279 965v1 M1279 970v1 M1279 975v1 M1279 979v1 M1279 984v1 M1279 989v1 M1454 58v1 M1454 62v1 M1454 67v1 M1454 72v1 M1454 76v1 M1454 81v1 M1454 86v1 M1454 90v1 M1454 95v1 M1454 100v1 M1454 104v1 M1454 109v1 M1454 114v1 M1454 118v1 M1454 123v1 M1454 128v1 M1454 132v1 M1454 137v1 M1454 142v1 M1454 146v1 M1454 151v1 M1454 156v1 M1454 160v1 M1454 165v1 M1454 170v1 M1454 175v1 M1454 179v1 M1454 184v1 M1454 189v1 M1454 193v1 M1454 198v1 M1454 203v1 M1454 207v1 M1454 212v1 M1454 217v1 M1454 221v1 M1454 226v1 M1454 231v1 M1454 235v1 M1454 240v1 M1454 245v1 M1454 249v1 M1454 254v1 M1454 259v1 M1454 263v1 M1454 268v1 M1454 273v1 M1454 277v1 M1454 282v1 M1454 287v1 M1454 292v1 M1454 296v1 M1454 301v1 M1454 306v1 M1454 310v1 M1454 315v1 M1454 320v1 M1454 324v1 M1454 329v1 M1454 334v1 M1454 338v1 M1454 343v1 M1454 348v1 M1454 352v1 M1454 357v1 M1454 362v1 M1454 366v1 M1454 371v1 M1454 376v1 M1454 380v1 M1454 385v1 M1454 390v1 M1454 394v1 M1454 399v1 M1454 404v1 M1454 409v1 M1454 413v1 M1454 418v1 M1454 423v1 M1454 427v1 M1454 432v1 M1454 437v1 M1454 441v1 M1454 446v1 M1454 451v1 M1454 455v1 M1454 460v1 M1454 465v1 M1454 469v1 M1454 474v1 M1454 479v1 M1454 483v1 M1454 488v1 M1454 493v1 M1454 497v1 M1454 502v1 M1454 507v1 M1454 511v1 M1454 516v1 M1454 521v1 M1454 526v1 M1454 530v1 M1454 535v1 M1454 540v1 M1454 544v1 M1454 549v1 M1454 554v1 M1454 558v1 M1454 563v1 M1454 568v1 M1454 572v1 M1454 577v1 M1454 582v1 M1454 586v1 M1454 591v1 M1454 596v1 M1454 600v1 M1454 605v1 M1454 610v1 M1454 614v1 M1454 619v1 M1454 624v1 M1454 628v1 M1454 633v1 M1454 638v1 M1454 642v1 M1454 647v1 M1454 652v1 M1454 657v1 M1454 661v1 M1454 666v1 M1454 671v1 M1454 675v1 M1454 680v1 M1454 685v1 M1454 689v1 M1454 694v1 M1454 699v1 M1454 703v1 M1454 708v1 M1454 713v1 M1454 717v1 M1454 722v1 M1454 727v1 M1454 731v1 M1454 736v1 M1454 741v1 M1454 745v1 M1454 750v1 M1454 755v1 M1454 759v1 M1454 764v1 M1454 769v1 M1454 774v1 M1454 778v1 M1454 783v1 M1454 788v1 M1454 792v1 M1454 797v1 M1454 802v1 M1454 806v1 M1454 811v1 M1454 816v1 M1454 820v1 M1454 825v1 M1454 830v1 M1454 834v1 M1454 839v1 M1454 844v1 M1454 848v1 M1454 853v1 M1454 858v1 M1454 862v1 M1454 867v1 M1454 872v1 M1454 876v1 M1454 881v1 M1454 886v1 M1454 891v1 M1454 895v1 M1454 900v1 M1454 905v1 M1454 909v1 M1454 914v1 M1454 919v1 M1454 923v1 M1454 928v1 M1454 933v1 M1454 937v1 M1454 942v1 M1454 947v1 M1454 951v1 M1454 956v1 M1454 961v1 M1454 965v1 M1454 970v1 M1454 975v1 M1454 979v1 M1454 984v1 M1454 989v1 M1629 58v1 M1629 62v1 M1629 67v1 M1629 72v1 M1629 76v1 M1629 81v1 M1629 86v1 M1629 90v1 M1629 95v1 M1629 100v1 M1629 104v1 M1629 109v1 M1629 114v1 M1629 118v1 M1629 123v1 M1629 128v1 M1629 132v1 M1629 137v1 M1629 142v1 M1629 146v1 M1629 151v1 M1629 156v1 M1629 160v1 M1629 165v1 M1629 170v1 M1629 175v1 M1629 179v1 M1629 184v1 M1629 189v1 M1629 193v1 M1629 198v1 M1629 203v1 M1629 207v1 M1629 212v1 M1629 217v1 M1629 221v1 M1629 226v1 M1629 231v1 M1629 235v1 M1629 240v1 M1629 245v1 M1629 249v1 M1629 254v1 M1629 259v1 M1629 263v1 M1629 268v1 M1629 273v1 M1629 277v1 M1629 282v1 M1629 287v1 M1629 292v1 M1629 296v1 M1629 301v1 M1629 306v1 M1629 310v1 M1629 315v1 M1629 320v1 M1629 324v1 M1629 329v1 M1629 334v1 M1629 338v1 M1629 343v1 M1629 348v1 M1629 352v1 M1629 357v1 M1629 362v1 M1629 366v1 M1629 371v1 M1629 376v1 M1629 380v1 M1629 385v1 M1629 390v1 M1629 394v1 M1629 399v1 M1629 404v1 M1629 409v1 M1629 413v1 M1629 418v1 M1629 423v1 M1629 427v1 M1629 432v1 M1629 437v1 M1629 441v1 M1629 446v1 M1629 451v1 M1629 455v1 M1629 460v1 M1629 465v1 M1629 469v1 M1629 474v1 M1629 479v1 M1629 483v1 M1629 488v1 M1629 493v1 M1629 497v1 M1629 502v1 M1629 507v1 M1629 511v1 M1629 516v1 M1629 521v1 M1629 526v1 M1629 530v1 M1629 535v1 M1629 540v1 M1629 544v1 M1629 549v1 M1629 554v1 M1629 558v1 M1629 563v1 M1629 568v1 M1629 572v1 M1629 577v1 M1629 582v1 M1629 586v1 M1629 591v1 M1629 596v1 M1629 600v1 M1629 605v1 M1629 610v1 M1629 614v1 M1629 619v1 M1629 624v1 M1629 628v1 M1629 633v1 M1629 638v1 M1629 642v1 M1629 647v1 M1629 652v1 M1629 657v1 M1629 661v1 M1629 666v1 M1629 671v1 M1629 675v1 M1629 680v1 M1629 685v1 M1629 689v1 M1629 694v1 M1629 699v1 M1629 703v1 M1629 708v1 M1629 713v1 M1629 717v1 M1629 722v1 M1629 727v1 M1629 731v1 M1629 736v1 M1629 741v1 M1629 745v1 M1629 750v1 M1629 755v1 M1629 759v1 M1629 764v1 M1629 769v1 M1629 774v1 M1629 778v1 M1629 783v1 M1629 788v1 M1629 792v1 M1629 797v1 M1629 802v1 M1629 806v1 M1629 811v1 M1629 816v1 M1629 820v1 M1629 825v1 M1629 830v1 M1629 834v1 M1629 839v1 M1629 844v1 M1629 848v1 M1629 853v1 M1629 858v1 M1629 862v1 M1629 867v1 M1629 872v1 M1629 876v1 M1629 881v1 M1629 886v1 M1629 891v1 M1629 895v1 M1629 900v1 M1629 905v1 M1629 909v1 M1629 914v1 M1629 919v1 M1629 923v1 M1629 928v1 M1629 933v1 M1629 937v1 M1629 942v1 M1629 947v1 M1629 951v1 M1629 956v1 M1629 961v1 M1629 965v1 M1629 970v1 M1629 975v1 M1629 979v1 M1629 984v1 M1629 989v1" stroke="#b4b4b4" stroke-width="1" shape-rendering="crispEdges" transform="translate(0.5,0)"/><rect x="3" y="290" width="1748" height="2" fill="#7a7a7a"/><rect x="3" y="524" width="1748" height="2" fill="#7a7a7a"/><rect x="3" y="758" width="1748" height="2" fill="#7a7a7a"/><line x1="3" y1="267.5" x2="1719" y2="267.5" stroke="#cfcfcf" stroke-width="1" stroke-dasharray="5 5" shape-rendering="crispEdges"/><line x1="3" y1="431.5" x2="1719" y2="431.5" stroke="#cfcfcf" stroke-width="1" stroke-dasharray="5 5" shape-rendering="crispEdges"/><line x1="3" y1="735.5" x2="1719" y2="735.5" stroke="#cfcfcf" stroke-width="1" stroke-dasharray="5 5" shape-rendering="crispEdges"/><line x1="3" y1="962.5" x2="1719" y2="962.5" stroke="#cfcfcf" stroke-width="1" stroke-dasharray="5 5" shape-rendering="crispEdges"/><line x1="55.5" y1="58" x2="55.5" y2="993" stroke="#cfcfcf" stroke-width="1" stroke-dasharray="5 5" shape-rendering="crispEdges"/><rect x="1717.1" y="73.9" width="30.4" height="14" fill="#000"/><text x="1745.50" y="85.01" font-size="13.4" fill="#e9df1c" text-anchor="end">40 V</text><rect x="1717.1" y="97.3" width="30.4" height="14" fill="#000"/><text x="1745.50" y="108.41" font-size="13.4" fill="#e9df1c" text-anchor="end">35 V</text><rect x="1717.1" y="120.7" width="30.4" height="14" fill="#000"/><text x="1745.50" y="131.81" font-size="13.4" fill="#e9df1c" text-anchor="end">30 V</text><rect x="1717.1" y="144.1" width="30.4" height="14" fill="#000"/><text x="1745.50" y="155.21" font-size="13.4" fill="#e9df1c" text-anchor="end">25 V</text><rect x="1717.1" y="167.5" width="30.4" height="14" fill="#000"/><text x="1745.50" y="178.61" font-size="13.4" fill="#e9df1c" text-anchor="end">20 V</text><rect x="1717.1" y="190.9" width="30.4" height="14" fill="#000"/><text x="1745.50" y="202.01" font-size="13.4" fill="#e9df1c" text-anchor="end">15 V</text><rect x="1717.1" y="214.3" width="30.4" height="14" fill="#000"/><text x="1745.50" y="225.41" font-size="13.4" fill="#e9df1c" text-anchor="end">10 V</text><rect x="1723.7" y="237.7" width="23.8" height="14" fill="#000"/><text x="1745.50" y="248.81" font-size="13.4" fill="#e9df1c" text-anchor="end">5 V</text><rect x="1723.7" y="261.1" width="23.8" height="14" fill="#000"/><text x="1745.50" y="272.21" font-size="13.4" fill="#e9df1c" text-anchor="end">0 V</text><rect x="1723.7" y="308.0" width="23.8" height="14" fill="#000"/><text x="1745.50" y="320.01" font-size="13.4" fill="#8cc63f" text-anchor="end">1 V</text><rect x="1703.9" y="331.4" width="43.6" height="14" fill="#000"/><text x="1745.50" y="343.41" font-size="13.4" fill="#8cc63f" text-anchor="end">800 mV</text><rect x="1703.9" y="354.8" width="43.6" height="14" fill="#000"/><text x="1745.50" y="366.81" font-size="13.4" fill="#8cc63f" text-anchor="end">600 mV</text><rect x="1703.9" y="378.2" width="43.6" height="14" fill="#000"/><text x="1745.50" y="390.21" font-size="13.4" fill="#8cc63f" text-anchor="end">400 mV</text><rect x="1703.9" y="401.6" width="43.6" height="14" fill="#000"/><text x="1745.50" y="413.61" font-size="13.4" fill="#8cc63f" text-anchor="end">200 mV</text><rect x="1723.7" y="425.0" width="23.8" height="14" fill="#000"/><text x="1745.50" y="437.01" font-size="13.4" fill="#8cc63f" text-anchor="end">0 V</text><rect x="1697.3" y="448.4" width="50.2" height="14" fill="#000"/><text x="1745.50" y="460.41" font-size="13.4" fill="#8cc63f" text-anchor="end">-200 mV</text><rect x="1697.3" y="471.8" width="50.2" height="14" fill="#000"/><text x="1745.50" y="483.81" font-size="13.4" fill="#8cc63f" text-anchor="end">-400 mV</text><rect x="1697.3" y="495.2" width="50.2" height="14" fill="#000"/><text x="1745.50" y="507.21" font-size="13.4" fill="#8cc63f" text-anchor="end">-600 mV</text><rect x="1677.5" y="541.4" width="70.0" height="14" fill="#000"/><text x="1745.50" y="553.41" font-size="13.4" fill="#e8922e" text-anchor="end">589.269 mT</text><rect x="1677.5" y="564.8" width="70.0" height="14" fill="#000"/><text x="1745.50" y="576.81" font-size="13.4" fill="#e8922e" text-anchor="end">515.611 mT</text><rect x="1677.5" y="588.2" width="70.0" height="14" fill="#000"/><text x="1745.50" y="600.21" font-size="13.4" fill="#e8922e" text-anchor="end">441.952 mT</text><rect x="1677.5" y="611.6" width="70.0" height="14" fill="#000"/><text x="1745.50" y="623.61" font-size="13.4" fill="#e8922e" text-anchor="end">368.293 mT</text><rect x="1677.5" y="635.0" width="70.0" height="14" fill="#000"/><text x="1745.50" y="647.01" font-size="13.4" fill="#e8922e" text-anchor="end">294.635 mT</text><rect x="1677.5" y="658.4" width="70.0" height="14" fill="#000"/><text x="1745.50" y="670.41" font-size="13.4" fill="#e8922e" text-anchor="end">220.976 mT</text><rect x="1677.5" y="681.8" width="70.0" height="14" fill="#000"/><text x="1745.50" y="693.81" font-size="13.4" fill="#e8922e" text-anchor="end">147.317 mT</text><rect x="1684.1" y="705.2" width="63.4" height="14" fill="#000"/><text x="1745.50" y="717.21" font-size="13.4" fill="#e8922e" text-anchor="end">73.659 mT</text><rect x="1723.7" y="728.6" width="23.8" height="14" fill="#000"/><text x="1745.50" y="740.61" font-size="13.4" fill="#e8922e" text-anchor="end">0 T</text><rect x="1670.9" y="768.4" width="76.6" height="14" fill="#000"/><text x="1745.50" y="780.41" font-size="13.4" fill="#8a3ab0" text-anchor="end">4.952312 kA</text><rect x="1670.9" y="791.8" width="76.6" height="14" fill="#000"/><text x="1745.50" y="803.81" font-size="13.4" fill="#8a3ab0" text-anchor="end">4.333273 kA</text><rect x="1670.9" y="815.2" width="76.6" height="14" fill="#000"/><text x="1745.50" y="827.21" font-size="13.4" fill="#8a3ab0" text-anchor="end">3.714234 kA</text><rect x="1670.9" y="838.6" width="76.6" height="14" fill="#000"/><text x="1745.50" y="850.61" font-size="13.4" fill="#8a3ab0" text-anchor="end">3.095195 kA</text><rect x="1670.9" y="862.0" width="76.6" height="14" fill="#000"/><text x="1745.50" y="874.01" font-size="13.4" fill="#8a3ab0" text-anchor="end">2.476156 kA</text><rect x="1670.9" y="885.4" width="76.6" height="14" fill="#000"/><text x="1745.50" y="897.41" font-size="13.4" fill="#8a3ab0" text-anchor="end">1.857117 kA</text><rect x="1670.9" y="908.8" width="76.6" height="14" fill="#000"/><text x="1745.50" y="920.81" font-size="13.4" fill="#8a3ab0" text-anchor="end">1.238078 kA</text><rect x="1684.1" y="932.2" width="63.4" height="14" fill="#000"/><text x="1745.50" y="944.21" font-size="13.4" fill="#8a3ab0" text-anchor="end">619.039 A</text><rect x="1723.7" y="955.6" width="23.8" height="14" fill="#000"/><text x="1745.50" y="967.61" font-size="13.4" fill="#8a3ab0" text-anchor="end">0 A</text><text x="56.20" y="987.11" font-size="13.4" fill="#c4c4c4" text-anchor="middle">0 s</text><text x="231.07" y="987.11" font-size="13.4" fill="#c4c4c4" text-anchor="middle">4 ms</text><text x="405.95" y="987.11" font-size="13.4" fill="#c4c4c4" text-anchor="middle">8 ms</text><text x="580.83" y="987.11" font-size="13.4" fill="#c4c4c4" text-anchor="middle">12 ms</text><text x="755.70" y="987.11" font-size="13.4" fill="#c4c4c4" text-anchor="middle">16 ms</text><text x="930.58" y="987.11" font-size="13.4" fill="#c4c4c4" text-anchor="middle">20 ms</text><text x="1105.45" y="987.11" font-size="13.4" fill="#c4c4c4" text-anchor="middle">24 ms</text><text x="1280.33" y="987.11" font-size="13.4" fill="#c4c4c4" text-anchor="middle">28 ms</text><text x="1455.20" y="987.11" font-size="13.4" fill="#c4c4c4" text-anchor="middle">32 ms</text><text x="1630.08" y="987.11" font-size="13.4" fill="#c4c4c4" text-anchor="middle">36 ms</text><g clip-path="url(#pc)"><defs><clipPath id="pc"><rect x="3" y="58" width="1748" height="935"/></clipPath></defs><path d="M3.0 429.2 L5.0 429.2 L7.0 429.2 L9.0 429.2 L11.0 429.2 L13.0 429.2 L15.0 429.2 L17.0 429.2 L19.0 429.2 L21.0 429.2 L23.0 429.2 L25.0 429.2 L27.0 429.2 L29.0 429.2 L31.0 429.2 L33.0 429.2 L35.0 429.2 L37.0 429.2 L39.0 429.2 L41.0 429.2 L43.0 429.2 L45.0 429.2 L47.0 429.2 L49.0 429.2 L51.0 429.2 L53.0 429.2 L55.0 429.2 L57.0 429.2 L59.0 429.2 L61.0 429.2 L63.0 429.2 L65.0 429.2 L67.0 429.2 L69.0 429.2 L71.0 429.2 L73.0 429.2 L75.0 429.2 L77.0 429.2 L79.0 429.2 L81.0 429.2 L83.0 429.2 L85.0 429.2 L87.0 429.2 L89.0 429.2 L91.0 429.2 L93.0 429.2 L95.0 429.2 L97.0 429.2 L99.0 429.2 L101.0 429.2 L103.0 429.2 L105.0 429.2 L107.0 429.2 L109.0 429.2 L111.0 429.2 L113.0 429.2 L115.0 429.2 L117.0 429.2 L119.0 429.2 L121.0 429.2 L123.0 429.2 L125.0 429.2 L127.0 429.2 L129.0 429.2 L131.0 429.2 L133.0 429.2 L135.0 429.2 L137.0 429.2 L139.0 429.2 L141.0 429.2 L143.0 429.2 L145.0 429.2 L147.0 429.2 L149.0 429.2 L151.0 429.2 L153.0 429.2 L155.0 429.2 L157.0 429.2 L159.0 429.2 L161.0 429.2 L163.0 429.2 L165.0 429.2 L167.0 429.2 L169.0 429.2 L171.0 429.2 L173.0 429.2 L175.0 429.2 L177.0 429.2 L179.0 429.2 L181.0 429.2 L183.0 429.2 L185.0 429.2 L187.1 428.4 L189.1 427.6 L191.2 426.8 L193.2 426.0 L195.3 425.1 L197.3 424.3 L199.4 423.5 L201.4 422.7 L203.5 421.9 L205.5 421.0 L207.6 420.2 L209.6 419.4 L211.7 418.6 L213.8 417.8 L215.8 416.9 L217.9 416.1 L219.9 415.3 L222.0 414.5 L224.0 413.6 L226.1 412.8 L228.1 412.0 L230.2 411.2 L232.2 410.4 L234.3 409.5 L236.3 408.7 L238.4 407.9 L240.4 407.1 L242.5 406.2 L244.5 406.2 L246.6 406.2 L248.6 406.2 L250.7 406.2 L252.7 406.2 L254.8 406.2 L256.8 406.2 L258.8 406.2 L260.9 406.2 L262.9 406.2 L265.0 406.2 L267.0 406.2 L269.1 406.4 L271.2 406.6 L273.3 406.8 L275.4 407.0 L277.5 407.2 L279.5 407.3 L281.6 407.5 L283.7 407.7 L285.8 407.9 L287.9 408.1 L290.0 408.2 L292.0 408.3 L294.0 408.4 L296.0 408.5 L298.0 408.6 L300.0 408.7 L302.0 408.8 L304.0 408.8 L306.0 408.9 L308.0 409.0 L310.0 409.1 L312.0 409.2 L314.0 409.2 L316.0 409.3 L318.0 409.4 L320.0 409.5 L322.0 409.6 L324.0 409.7 L326.0 409.8 L328.0 409.9 L330.0 410.0 L332.0 410.1 L334.0 410.2 L336.0 410.3 L338.0 410.4 L340.0 410.5 L342.0 410.6 L344.0 410.7 L346.0 410.8 L348.0 410.9 L350.0 411.0 L352.0 411.0 L354.0 411.0 L356.0 411.1 L358.0 411.1 L360.0 411.1 L362.0 411.1 L364.0 411.1 L366.0 411.2 L368.0 411.2 L370.0 411.2 L372.0 411.2 L374.0 411.2 L376.0 411.3 L378.0 411.3 L380.0 411.3 L382.0 411.3 L384.0 411.3 L386.0 411.4 L388.0 411.4 L390.0 411.4 L392.0 411.4 L394.0 411.4 L396.0 411.5 L398.0 411.5 L400.0 411.5 L402.0 411.5 L404.0 411.4 L406.0 411.4 L408.0 411.4 L410.0 411.3 L412.0 411.3 L414.0 411.3 L416.0 411.2 L418.0 411.2 L420.0 411.2 L422.0 411.1 L424.0 411.1 L426.0 411.1 L428.0 411.0 L430.0 411.0 L432.0 411.0 L434.0 410.9 L436.0 410.9 L438.0 410.9 L440.0 410.8 L442.0 410.8 L444.0 410.8 L446.0 410.7 L448.0 410.7 L450.0 410.7 L452.0 410.6 L454.0 410.6 L456.0 410.6 L458.0 410.5 L460.0 410.5 L462.0 410.4 L464.0 410.2 L466.0 410.1 L468.0 409.9 L470.0 409.8 L472.0 409.6 L474.0 409.4 L476.0 409.3 L478.0 409.1 L480.0 409.0 L482.0 408.9 L484.0 408.9 L486.0 408.8 L488.0 408.8 L490.0 408.7 L492.0 408.6 L494.0 408.6 L496.0 408.5 L498.0 408.5 L500.0 408.4 L502.0 408.3 L504.0 408.3 L506.0 408.2 L508.0 408.2 L510.0 408.1 L512.0 408.0 L514.0 408.0 L516.0 407.9 L518.0 407.9 L520.0 407.8 L522.0 407.7 L524.0 407.7 L526.0 407.6 L528.0 407.6 L530.0 407.5 L532.0 407.5 L534.0 407.5 L536.0 407.4 L538.0 407.4 L540.0 407.4 L542.0 407.4 L544.0 407.4 L546.0 407.4 L548.0 407.4 L550.0 407.3 L552.0 407.3 L554.0 407.3 L556.0 407.3 L558.0 407.3 L560.0 407.2 L562.0 407.2 L564.0 407.2 L566.0 407.2 L568.0 407.2 L570.0 407.2 L572.0 407.1 L574.0 407.1 L576.0 407.1 L578.0 407.1 L580.0 407.1 L582.0 407.1 L584.0 407.1 L586.0 407.0 L588.0 407.0 L590.0 407.0 L592.0 407.0 L594.0 407.0 L596.0 406.9 L598.0 406.9 L600.0 406.9 L602.0 406.9 L604.0 406.9 L606.0 406.8 L608.0 406.8 L610.0 406.8 L612.0 406.8 L614.0 406.8 L616.0 406.7 L618.0 406.7 L620.0 406.7 L622.0 406.7 L624.0 406.7 L626.0 406.6 L628.0 406.6 L630.0 406.6 L632.0 406.6 L634.0 406.6 L636.0 406.5 L638.0 406.5 L640.0 406.5 L642.0 406.5 L644.0 406.5 L646.0 406.4 L648.0 406.4 L650.0 406.4 L652.0 406.4 L654.0 406.4 L656.0 406.3 L658.0 406.3 L660.0 406.3 L662.0 406.3 L664.0 406.3 L666.0 406.2 L668.0 406.2 L670.0 406.2 L672.0 406.2 L674.0 406.2 L676.0 406.1 L678.0 406.1 L680.0 406.1 L682.0 406.1 L684.0 406.1 L686.0 406.0 L688.0 406.0 L690.0 406.0 L692.0 406.0 L694.0 406.0 L696.0 406.0 L698.0 406.0 L700.0 406.0 L702.0 406.0 L704.0 406.0 L706.0 406.0 L708.0 406.0 L710.0 406.0 L712.0 406.0 L714.0 406.0 L716.0 406.0 L718.0 406.0 L720.0 406.0 L722.0 406.0 L724.0 406.0 L726.0 406.0 L728.0 406.0 L730.0 406.0 L732.0 406.0 L734.0 406.0 L736.0 406.0 L738.0 406.0 L740.0 406.0 L742.0 406.0 L744.0 406.0 L746.0 406.0 L748.0 406.0 L750.0 406.0 L752.0 406.0 L754.0 406.0 L756.0 406.0 L758.0 406.0 L760.0 406.0 L762.0 406.0 L764.0 406.0 L766.0 406.1 L768.0 406.1 L770.0 406.1 L772.0 406.1 L774.0 406.1 L776.0 406.1 L778.0 406.1 L780.0 406.1 L782.0 406.1 L784.0 406.1 L786.0 406.1 L788.0 406.1 L790.0 406.1 L792.0 406.1 L794.0 406.1 L796.0 406.2 L798.0 406.2 L800.0 406.2 L802.0 406.2 L804.0 406.2 L806.0 406.2 L808.0 406.2 L810.0 406.2 L812.0 406.2 L814.0 406.2 L816.0 406.2 L818.0 406.2 L820.0 406.2 L822.0 406.2 L824.0 406.2 L826.0 406.3 L828.0 406.3 L830.0 406.3 L832.0 406.3 L834.0 406.3 L836.0 406.3 L838.0 406.3 L840.0 406.3 L842.0 406.3 L844.0 406.3 L846.0 406.3 L848.0 406.3 L850.0 406.3 L852.0 406.3 L854.0 406.3 L856.0 406.4 L858.0 406.4 L860.0 406.4 L862.0 406.4 L864.0 406.4 L866.0 406.4 L868.0 406.4 L870.0 406.4 L872.0 406.4 L874.0 406.4 L876.0 406.4 L878.0 406.4 L880.0 406.4 L882.0 406.4 L884.0 406.4 L886.0 406.5 L888.0 406.5 L890.0 406.5 L892.0 406.5 L894.0 406.5 L896.0 406.5 L898.0 406.5 L900.0 406.5 L902.0 406.5 L904.0 406.5 L906.0 406.5 L908.0 406.5 L910.0 406.6 L912.0 406.6 L914.0 406.6 L916.0 406.6 L918.0 406.6 L920.0 406.6 L922.0 406.6 L924.0 406.6 L926.0 406.6 L928.0 406.6 L930.0 406.6 L932.0 406.7 L934.0 406.7 L936.0 406.7 L938.0 406.7 L940.0 406.7 L942.0 406.7 L944.0 406.7 L946.0 406.7 L948.0 406.7 L950.0 406.8 L952.0 406.8 L954.0 406.8 L956.0 406.8 L958.0 406.8 L960.0 406.8 L962.0 406.8 L964.0 406.8 L966.0 406.8 L968.0 406.8 L970.0 406.9 L972.0 406.9 L974.0 406.9 L976.0 406.9 L978.0 406.9 L980.0 406.9 L982.0 406.9 L984.0 406.9 L986.0 406.9 L988.0 406.9 L990.0 406.9 L992.0 407.0 L994.0 407.0 L996.0 407.0 L998.0 407.0 L1000.0 407.0 L1002.0 407.0 L1004.0 407.0 L1006.0 407.0 L1008.0 407.1 L1010.0 407.1 L1012.0 407.1 L1014.0 407.1 L1016.0 407.1 L1018.0 407.1 L1020.0 407.1 L1022.0 407.1 L1024.0 407.1 L1026.0 407.2 L1028.0 407.2 L1030.0 407.2 L1032.0 407.2 L1034.0 407.2 L1036.0 407.2 L1038.0 407.2 L1040.0 407.2 L1042.0 407.3 L1044.0 407.3 L1046.0 407.3 L1048.0 407.3 L1050.0 407.3 L1052.0 407.3 L1054.0 407.3 L1056.0 407.4 L1058.0 407.4 L1060.0 407.4 L1062.0 407.4 L1064.0 407.4 L1066.0 407.4 L1068.0 407.4 L1070.0 407.4 L1072.0 407.4 L1074.0 407.5 L1076.0 407.5 L1078.0 407.5 L1080.0 407.5 L1083.8 408.5 L1085.8 408.3 L1087.8 408.1 L1089.8 407.9 L1091.9 407.7 L1093.9 407.5 L1095.9 407.3 L1098.0 407.1 L1100.0 406.9 L1102.5 407.1 L1105.0 407.3 L1107.5 407.5 L1109.6 407.2 L1111.8 406.9 L1113.9 406.6 L1116.0 406.2 L1118.0 406.3 L1120.0 406.3 L1122.0 406.4 L1124.0 406.4 L1126.0 406.4 L1128.0 406.5 L1130.0 406.5 L1132.5 407.5 L1135.0 404.4 L1136.9 400.2 L1140.0 401.2 L1142.5 402.8 L1145.0 404.4 L1147.0 405.9 L1149.0 407.4 L1151.0 408.9 L1153.0 410.4 L1155.0 411.9 L1157.1 412.9 L1159.2 414.0 L1161.2 415.0 L1163.3 416.0 L1165.4 417.1 L1167.5 418.1 L1169.6 418.7 L1171.7 419.4 L1173.8 420.0 L1175.8 420.6 L1177.9 421.3 L1180.0 421.9 L1182.1 422.4 L1184.2 422.9 L1186.2 423.4 L1188.3 424.0 L1190.4 424.5 L1192.5 425.0 L1194.6 425.2 L1196.7 425.5 L1198.8 425.8 L1200.8 426.0 L1202.9 426.2 L1205.0 426.5 L1207.1 426.6 L1209.2 426.8 L1211.2 426.9 L1213.3 427.1 L1215.4 427.2 L1217.5 427.3 L1219.6 427.5 L1221.7 427.6 L1223.8 427.8 L1225.8 427.9 L1227.9 428.0 L1230.0 428.1 L1232.1 428.2 L1234.2 428.3 L1236.2 428.4 L1238.3 428.5 L1240.4 428.6 L1242.5 428.7 L1244.6 428.8 L1246.7 428.9 L1248.8 429.0 L1250.8 429.0 L1252.8 429.0 L1254.9 429.0 L1256.9 429.1 L1258.9 429.1 L1261.0 429.1 L1263.0 429.1 L1265.0 429.1 L1267.1 429.1 L1269.1 429.1 L1271.1 429.2 L1273.2 429.2 L1275.2 429.2 L1277.2 429.2 L1279.3 429.2 L1281.3 429.2 L1283.4 429.2 L1285.4 429.3 L1287.4 429.3 L1289.5 429.3 L1291.5 429.3 L1293.5 429.3 L1295.6 429.3 L1297.6 429.3 L1299.6 429.4 L1301.7 429.4 L1303.7 429.4 L1305.8 429.4 L1307.8 429.4 L1309.8 429.4 L1311.9 429.4 L1313.9 429.5 L1315.9 429.5 L1318.0 429.5 L1320.0 429.5 L1322.0 429.5 L1324.0 429.5 L1326.0 429.5 L1328.0 429.5 L1330.0 429.5 L1332.0 429.5 L1334.0 429.5 L1336.0 429.5 L1338.0 429.5 L1340.0 429.5 L1342.1 429.5 L1344.1 429.5 L1346.1 429.5 L1348.1 429.5 L1350.1 429.5 L1352.1 429.5 L1354.1 429.5 L1356.1 429.5 L1358.1 429.5 L1360.1 429.5 L1362.1 429.5 L1364.1 429.5 L1366.1 429.5 L1368.1 429.5 L1370.1 429.5 L1372.1 429.5 L1374.1 429.5 L1376.1 429.5 L1378.1 429.5 L1380.1 429.5 L1382.1 429.5 L1384.1 429.5 L1386.2 429.5 L1388.2 429.5 L1390.2 429.5 L1392.2 429.5 L1394.2 429.5 L1396.2 429.5 L1398.2 429.5 L1400.2 429.5 L1402.2 429.5 L1404.2 429.5 L1406.2 429.4 L1408.2 429.4 L1410.2 429.4 L1412.2 429.4 L1414.2 429.4 L1416.2 429.4 L1418.2 429.4 L1420.2 429.4 L1422.2 429.4 L1424.2 429.4 L1426.2 429.4 L1428.3 429.4 L1430.3 429.4 L1432.3 429.4 L1434.3 429.4 L1436.3 429.4 L1438.3 429.4 L1440.3 429.4 L1442.3 429.4 L1444.3 429.4 L1446.3 429.4 L1448.3 429.4 L1450.3 429.4 L1452.3 429.4 L1454.3 429.4 L1456.3 429.4 L1458.3 429.4 L1460.3 429.4 L1462.3 429.4 L1464.3 429.4 L1466.3 429.4 L1468.3 429.4 L1470.3 429.4 L1472.4 429.4 L1474.4 429.4 L1476.4 429.4 L1478.4 429.4 L1480.4 429.4 L1482.4 429.4 L1484.4 429.4 L1486.4 429.4 L1488.4 429.4 L1490.4 429.4 L1492.4 429.4 L1494.4 429.4 L1496.4 429.4 L1498.4 429.4 L1500.4 429.4 L1502.4 429.4 L1504.4 429.4 L1506.4 429.4 L1508.4 429.4 L1510.4 429.4 L1512.4 429.4 L1514.5 429.4 L1516.5 429.4 L1518.5 429.4 L1520.5 429.4 L1522.5 429.4 L1524.5 429.4 L1526.5 429.4 L1528.5 429.4 L1530.5 429.4 L1532.5 429.4 L1534.5 429.4 L1536.5 429.4 L1538.5 429.4 L1540.5 429.4 L1542.5 429.4 L1544.5 429.4 L1546.5 429.4 L1548.5 429.4 L1550.5 429.4 L1552.5 429.4 L1554.5 429.4 L1556.5 429.4 L1558.6 429.4 L1560.6 429.4 L1562.6 429.4 L1564.6 429.4 L1566.6 429.4 L1568.6 429.4 L1570.6 429.4 L1572.6 429.4 L1574.6 429.4 L1576.6 429.4 L1578.6 429.4 L1580.6 429.3 L1582.6 429.3 L1584.6 429.3 L1586.6 429.3 L1588.6 429.3 L1590.6 429.3 L1592.6 429.3 L1594.6 429.3 L1596.6 429.3 L1598.6 429.3 L1600.7 429.3 L1602.7 429.3 L1604.7 429.3 L1606.7 429.3 L1608.7 429.3 L1610.7 429.3 L1612.7 429.3 L1614.7 429.3 L1616.7 429.3 L1618.7 429.3 L1620.7 429.3 L1622.7 429.3 L1624.7 429.3 L1626.7 429.3 L1628.7 429.3 L1630.7 429.3 L1632.7 429.3 L1634.7 429.3 L1636.7 429.3 L1638.7 429.3 L1640.7 429.3 L1642.7 429.3 L1644.8 429.3 L1646.8 429.3 L1648.8 429.3 L1650.8 429.3 L1652.8 429.3 L1654.8 429.3 L1656.8 429.3 L1658.8 429.3 L1660.8 429.3 L1662.8 429.3 L1664.8 429.3 L1666.8 429.3 L1668.8 429.3 L1670.8 429.3 L1672.8 429.3 L1674.8 429.3 L1676.8 429.3 L1678.8 429.3 L1680.8 429.3 L1682.8 429.3 L1684.8 429.3 L1686.9 429.3 L1688.9 429.3 L1690.9 429.3 L1692.9 429.3 L1694.9 429.3 L1696.9 429.3 L1698.9 429.3 L1700.9 429.3 L1702.9 429.3 L1704.9 429.3 L1706.9 429.3 L1708.9 429.3 L1710.9 429.3 L1712.9 429.3 L1714.9 429.3 L1716.9 429.3 L1718.9 429.3 L1720.9 429.3 L1722.9 429.3 L1724.9 429.3 L1726.9 429.3 L1728.9 429.3 L1731.0 429.3 L1733.0 429.3 L1735.0 429.3 L1737.0 429.3 L1739.0 429.3 L1741.0 429.3 L1743.0 429.3 L1745.0 429.3 L1747.0 429.3 L1749.0 429.3 L1751.0 429.2" fill="none" stroke="#8cc63f" stroke-width="1.3" stroke-linejoin="round"/><path d="M3.0 734.5 L5.0 734.5 L7.0 734.5 L9.0 734.5 L11.0 734.5 L13.0 734.5 L15.0 734.5 L17.0 734.5 L19.0 734.5 L21.0 734.5 L23.0 734.5 L25.0 734.5 L27.0 734.5 L29.0 734.5 L31.0 734.5 L33.0 734.5 L35.0 734.5 L37.0 734.5 L39.0 734.5 L41.0 734.5 L43.0 734.5 L45.0 734.5 L47.0 734.5 L49.0 734.5 L51.0 734.5 L53.0 734.5 L55.0 734.5 L57.0 734.5 L59.0 734.5 L61.0 734.5 L63.0 734.5 L65.0 734.5 L65.0 731.2 L67.0 730.7 L69.0 730.2 L71.0 729.7 L73.0 729.2 L75.1 728.7 L77.1 728.2 L79.1 727.7 L81.1 727.2 L83.1 726.7 L85.1 726.2 L87.1 725.7 L89.1 725.2 L91.2 724.7 L93.2 724.2 L95.2 723.7 L97.2 723.2 L99.2 722.7 L101.2 722.2 L103.2 721.7 L105.2 721.2 L107.3 720.7 L109.3 720.2 L111.3 719.7 L113.3 719.2 L115.3 718.7 L117.3 718.2 L119.3 717.7 L121.3 717.2 L123.4 716.7 L125.4 716.2 L127.4 715.7 L129.4 715.2 L131.4 714.6 L133.4 714.1 L135.4 713.6 L137.4 713.1 L139.5 712.6 L141.5 712.1 L143.5 711.6 L145.5 711.1 L147.5 710.6 L149.5 710.1 L151.5 709.6 L153.5 709.1 L155.5 708.6 L157.6 708.1 L159.6 707.6 L161.6 707.1 L163.6 706.6 L165.6 706.1 L167.6 705.6 L169.6 705.1 L171.6 704.6 L173.7 704.1 L175.7 703.6 L177.7 703.1 L179.7 702.6 L181.7 702.1 L183.7 701.6 L185.7 701.1 L187.7 700.6 L189.8 700.1 L191.8 699.6 L193.8 699.1 L195.8 698.6 L197.8 698.0 L199.8 697.5 L201.8 697.0 L203.8 696.5 L205.9 696.0 L207.9 695.5 L209.9 695.0 L211.9 694.5 L213.9 694.0 L215.9 693.5 L217.9 693.0 L219.9 692.5 L222.0 692.0 L224.0 691.5 L226.0 691.0 L228.0 690.5 L230.0 690.0 L232.0 689.5 L234.0 689.1 L236.0 688.6 L238.0 688.2 L240.1 687.7 L242.1 687.2 L244.1 686.8 L246.1 686.3 L248.1 685.9 L250.1 685.4 L252.1 684.9 L254.1 684.5 L256.1 684.0 L258.2 683.6 L260.2 683.1 L262.2 682.6 L264.2 682.2 L266.2 681.7 L268.2 681.3 L270.2 680.8 L272.2 680.3 L274.3 679.9 L276.3 679.4 L278.3 679.0 L280.3 678.5 L282.3 678.0 L284.3 677.6 L286.3 677.1 L288.3 676.7 L290.3 676.2 L292.4 675.7 L294.4 675.3 L296.4 674.8 L298.4 674.4 L300.4 673.9 L302.4 673.4 L304.4 673.0 L306.4 672.5 L308.4 672.1 L310.5 671.6 L312.5 671.1 L314.5 670.7 L316.5 670.2 L318.5 669.8 L320.5 669.3 L322.5 668.9 L324.5 668.4 L326.6 667.9 L328.6 667.5 L330.6 667.0 L332.6 666.6 L334.6 666.1 L336.6 665.6 L338.6 665.2 L340.6 664.7 L342.6 664.3 L344.7 663.8 L346.7 663.3 L348.7 662.9 L350.7 662.4 L352.7 662.0 L354.7 661.5 L356.7 661.0 L358.7 660.6 L360.7 660.1 L362.8 659.7 L364.8 659.2 L366.8 658.7 L368.8 658.3 L370.8 657.8 L372.8 657.4 L374.8 656.9 L376.8 656.4 L378.9 656.0 L380.9 655.5 L382.9 655.1 L384.9 654.6 L386.9 654.1 L388.9 653.7 L390.9 653.2 L392.9 652.8 L394.9 652.3 L397.0 651.8 L399.0 651.4 L401.0 650.9 L403.0 650.5 L405.0 650.0 L407.1 649.6 L409.1 649.2 L411.2 648.8 L413.2 648.4 L415.3 648.1 L417.4 647.7 L419.4 647.3 L421.5 646.9 L423.5 646.5 L425.6 646.1 L427.6 645.7 L429.7 645.3 L431.8 645.0 L433.8 644.6 L435.9 644.2 L437.9 643.8 L440.0 643.4 L442.0 643.1 L444.0 642.7 L446.0 642.4 L448.0 642.0 L450.0 641.7 L452.0 641.3 L454.0 641.0 L456.0 640.6 L458.0 640.3 L460.0 640.0 L462.0 639.6 L464.0 639.3 L466.0 638.9 L468.0 638.6 L470.0 638.2 L472.0 637.9 L474.0 637.5 L476.0 637.2 L478.0 636.8 L480.0 636.5 L482.0 636.1 L484.0 635.8 L486.0 635.4 L488.0 635.0 L490.1 634.7 L492.1 634.3 L494.1 633.9 L496.1 633.6 L498.1 633.2 L500.1 632.8 L502.1 632.5 L504.1 632.1 L506.2 631.7 L508.2 631.3 L510.2 631.0 L512.2 630.6 L514.2 630.2 L516.2 629.9 L518.2 629.5 L520.2 629.1 L522.3 628.8 L524.3 628.4 L526.3 628.0 L528.3 627.7 L530.3 627.3 L532.3 626.9 L534.3 626.6 L536.3 626.2 L538.3 625.8 L540.4 625.5 L542.4 625.1 L544.4 624.7 L546.4 624.4 L548.4 624.0 L550.4 623.6 L552.4 623.3 L554.4 622.9 L556.5 622.5 L558.5 622.1 L560.5 621.8 L562.5 621.4 L564.5 621.0 L566.5 620.7 L568.5 620.3 L570.5 619.9 L572.6 619.6 L574.6 619.2 L576.6 618.8 L578.6 618.5 L580.6 618.1 L582.6 617.8 L584.6 617.5 L586.6 617.2 L588.6 616.8 L590.7 616.5 L592.7 616.2 L594.7 615.9 L596.7 615.6 L598.7 615.3 L600.7 615.0 L602.7 614.7 L604.7 614.3 L606.7 614.0 L608.8 613.7 L610.8 613.4 L612.8 613.1 L614.8 612.8 L616.8 612.5 L618.8 612.2 L620.8 611.8 L622.8 611.5 L624.9 611.2 L626.9 610.9 L628.9 610.6 L630.9 610.3 L632.9 610.0 L634.9 609.7 L636.9 609.3 L638.9 609.0 L640.9 608.7 L643.0 608.4 L645.0 608.1 L647.0 607.8 L649.0 607.5 L651.0 607.2 L653.0 606.8 L655.0 606.5 L657.0 606.2 L659.0 605.9 L661.1 605.6 L663.1 605.3 L665.1 605.0 L667.1 604.7 L669.1 604.3 L671.1 604.0 L673.1 603.7 L675.1 603.4 L677.2 603.1 L679.2 602.8 L681.2 602.5 L683.2 602.2 L685.2 601.8 L687.2 601.5 L689.2 601.2 L691.2 600.9 L693.2 600.6 L695.3 600.3 L697.3 600.0 L699.3 599.7 L701.3 599.3 L703.3 599.0 L705.3 598.7 L707.3 598.4 L709.3 598.1 L711.3 597.8 L713.4 597.5 L715.4 597.2 L717.4 596.8 L719.4 596.5 L721.4 596.2 L723.4 595.9 L725.4 595.6 L727.4 595.3 L729.5 595.0 L731.5 594.7 L733.5 594.3 L735.5 594.0 L737.5 593.7 L739.5 593.4 L741.5 593.1 L743.5 592.8 L745.5 592.5 L747.6 592.2 L749.6 591.8 L751.6 591.5 L753.6 591.2 L755.6 590.9 L757.6 590.7 L759.6 590.4 L761.6 590.2 L763.7 590.0 L765.7 589.7 L767.7 589.5 L769.7 589.2 L771.7 589.0 L773.7 588.8 L775.8 588.5 L777.8 588.3 L779.8 588.1 L781.8 587.8 L783.8 587.6 L785.8 587.4 L787.9 587.1 L789.9 586.9 L791.9 586.7 L793.9 586.4 L795.9 586.2 L797.9 585.9 L800.0 585.7 L802.0 585.5 L804.0 585.2 L806.0 585.0 L808.0 584.8 L810.0 584.5 L812.1 584.3 L814.1 584.1 L816.1 583.8 L818.1 583.6 L820.1 583.3 L822.1 583.1 L824.2 582.9 L826.2 582.6 L828.2 582.4 L830.2 582.2 L832.2 581.9 L834.2 581.7 L836.3 581.5 L838.3 581.2 L840.3 581.0 L842.3 580.8 L844.3 580.5 L846.3 580.3 L848.3 580.0 L850.4 579.8 L852.4 579.6 L854.4 579.3 L856.4 579.1 L858.4 578.9 L860.4 578.6 L862.5 578.4 L864.5 578.2 L866.5 577.9 L868.5 577.7 L870.5 577.4 L872.5 577.2 L874.6 577.0 L876.6 576.7 L878.6 576.5 L880.6 576.3 L882.6 576.0 L884.6 575.8 L886.7 575.6 L888.7 575.3 L890.7 575.1 L892.7 574.8 L894.7 574.6 L896.7 574.4 L898.8 574.1 L900.8 573.9 L902.8 573.7 L904.8 573.4 L906.8 573.2 L908.8 573.0 L910.9 572.7 L912.9 572.5 L914.9 572.3 L916.9 572.0 L918.9 571.8 L920.9 571.5 L923.0 571.3 L925.0 571.1 L927.0 570.8 L929.0 570.6 L931.0 570.4 L933.1 570.2 L935.1 570.0 L937.1 569.8 L939.1 569.6 L941.2 569.5 L943.2 569.3 L945.2 569.1 L947.3 568.9 L949.3 568.7 L951.3 568.5 L953.3 568.3 L955.4 568.1 L957.4 567.9 L959.4 567.7 L961.5 567.5 L963.5 567.3 L965.5 567.2 L967.5 567.0 L969.6 566.8 L971.6 566.6 L973.6 566.4 L975.7 566.2 L977.7 566.0 L979.7 565.8 L981.7 565.6 L983.8 565.4 L985.8 565.2 L987.8 565.0 L989.9 564.9 L991.9 564.7 L993.9 564.5 L995.9 564.3 L998.0 564.1 L1000.0 563.9 L1002.0 563.8 L1004.0 563.7 L1006.0 563.6 L1008.0 563.5 L1010.0 563.4 L1012.0 563.3 L1014.0 563.2 L1016.0 563.1 L1018.0 563.0 L1020.0 562.9 L1022.0 562.8 L1024.0 562.7 L1026.0 562.6 L1028.0 562.5 L1030.0 562.4 L1032.0 562.3 L1034.0 562.2 L1036.0 562.1 L1038.0 562.0 L1040.0 561.9 L1042.0 561.8 L1044.1 561.6 L1046.1 561.5 L1048.1 561.3 L1050.2 561.2 L1052.2 561.1 L1054.2 560.9 L1056.3 560.8 L1058.3 560.7 L1060.3 560.5 L1062.4 560.4 L1064.4 560.2 L1066.4 560.1 L1068.5 560.0 L1070.5 559.8 L1072.5 559.7 L1074.5 559.5 L1076.6 559.4 L1078.6 559.3 L1080.6 559.1 L1082.7 559.0 L1084.7 558.8 L1086.7 558.7 L1088.8 558.6 L1090.8 558.4 L1092.8 558.3 L1094.9 558.2 L1096.9 558.0 L1098.9 557.9 L1101.0 557.7 L1103.0 557.6 L1105.0 557.5 L1107.0 557.4 L1109.0 557.3 L1111.0 557.2 L1113.0 557.1 L1115.1 557.0 L1117.1 557.0 L1119.1 556.9 L1121.1 556.8 L1123.1 556.7 L1125.1 556.6 L1127.1 556.5 L1129.1 556.4 L1131.1 556.3 L1133.1 556.2 L1135.1 556.1 L1137.2 556.0 L1139.2 555.9 L1141.2 555.8 L1143.2 555.8 L1145.2 555.7 L1147.2 555.6 L1149.2 555.5 L1151.2 555.4 L1153.2 555.3 L1155.2 555.2 L1157.2 555.1 L1159.3 555.0 L1161.3 554.9 L1163.3 554.8 L1165.3 554.7 L1167.3 554.6 L1169.3 554.6 L1171.3 554.5 L1173.3 554.4 L1175.3 554.3 L1177.3 554.2 L1179.4 554.1 L1181.4 554.0 L1183.4 553.9 L1185.4 553.8 L1187.4 553.7 L1189.4 553.6 L1191.4 553.5 L1193.4 553.4 L1195.4 553.4 L1197.4 553.3 L1199.4 553.2 L1201.5 553.1 L1203.5 553.0 L1205.5 552.9 L1207.5 552.8 L1209.5 552.7 L1211.5 552.6 L1213.5 552.5 L1215.5 552.4 L1217.5 552.3 L1219.5 552.2 L1221.5 552.2 L1223.6 552.1 L1225.6 552.0 L1227.6 551.9 L1229.6 551.8 L1231.6 551.7 L1233.6 551.6 L1235.6 551.6 L1237.6 551.5 L1239.7 551.5 L1241.7 551.4 L1243.7 551.4 L1245.7 551.3 L1247.8 551.3 L1249.8 551.2 L1251.8 551.2 L1253.8 551.2 L1255.8 551.1 L1257.9 551.1 L1259.9 551.0 L1261.9 551.0 L1263.9 550.9 L1266.0 550.9 L1268.0 550.8 L1270.0 550.8 L1272.0 550.8 L1274.0 550.7 L1276.1 550.7 L1278.1 550.6 L1280.1 550.6 L1282.1 550.5 L1284.2 550.5 L1286.2 550.4 L1288.2 550.4 L1290.2 550.4 L1292.2 550.3 L1294.3 550.3 L1296.3 550.2 L1298.3 550.2 L1300.3 550.1 L1302.4 550.1 L1304.4 550.0 L1306.4 550.0 L1308.4 550.0 L1310.4 549.9 L1312.5 549.9 L1314.5 549.8 L1316.5 549.8 L1318.5 549.7 L1320.6 549.7 L1322.6 549.6 L1324.6 549.6 L1326.6 549.6 L1328.6 549.6 L1330.6 549.6 L1332.6 549.6 L1334.6 549.6 L1336.6 549.6 L1338.6 549.6 L1340.6 549.6 L1342.7 549.6 L1344.7 549.6 L1346.7 549.6 L1348.7 549.6 L1350.7 549.6 L1352.7 549.6 L1354.7 549.6 L1356.7 549.6 L1358.7 549.6 L1360.7 549.6 L1362.7 549.6 L1364.7 549.6 L1366.7 549.6 L1368.7 549.6 L1370.7 549.6 L1372.7 549.6 L1374.8 549.6 L1376.8 549.6 L1378.8 549.6 L1380.8 549.6 L1382.8 549.6 L1384.8 549.6 L1386.8 549.6 L1388.8 549.6 L1390.8 549.6 L1392.8 549.6 L1394.8 549.6 L1396.8 549.6 L1398.8 549.6 L1400.8 549.6 L1402.8 549.6 L1404.8 549.6 L1406.9 549.6 L1408.9 549.6 L1410.9 549.6 L1412.9 549.6 L1414.9 549.6 L1416.9 549.6 L1418.9 549.6 L1420.9 549.6 L1422.9 549.6 L1424.9 549.6 L1426.9 549.6 L1428.9 549.6 L1430.9 549.6 L1432.9 549.6 L1434.9 549.6 L1436.9 549.6 L1439.0 549.6 L1441.0 549.6 L1443.0 549.6 L1445.0 549.6 L1447.0 549.6 L1449.0 549.6 L1451.0 549.6 L1453.0 549.6 L1455.0 549.6 L1457.0 549.6 L1459.0 549.7 L1461.1 549.7 L1463.1 549.8 L1465.1 549.8 L1467.1 549.9 L1469.1 549.9 L1471.2 550.0 L1473.2 550.0 L1475.2 550.1 L1477.2 550.1 L1479.2 550.2 L1481.3 550.2 L1483.3 550.3 L1485.3 550.3 L1487.3 550.4 L1489.3 550.4 L1491.4 550.5 L1493.4 550.5 L1495.4 550.6 L1497.4 550.6 L1499.4 550.7 L1501.5 550.7 L1503.5 550.8 L1505.5 550.8 L1507.5 550.9 L1509.6 550.9 L1511.6 551.0 L1513.6 551.0 L1515.6 551.1 L1517.6 551.1 L1519.7 551.2 L1521.7 551.2 L1523.7 551.3 L1525.7 551.3 L1527.7 551.4 L1529.8 551.4 L1531.8 551.5 L1533.8 551.5 L1535.8 551.6 L1537.8 551.6 L1539.9 551.7 L1541.9 551.7 L1543.9 551.8 L1545.9 551.8 L1547.9 551.9 L1550.0 551.9 L1552.0 552.0 L1554.0 552.0 L1556.0 552.1 L1558.0 552.2 L1560.1 552.3 L1562.1 552.4 L1564.1 552.5 L1566.1 552.6 L1568.1 552.7 L1570.2 552.8 L1572.2 552.8 L1574.2 552.9 L1576.2 553.0 L1578.2 553.1 L1580.3 553.2 L1582.3 553.3 L1584.3 553.4 L1586.3 553.5 L1588.3 553.6 L1590.4 553.7 L1592.4 553.8 L1594.4 553.9 L1596.4 554.0 L1598.4 554.1 L1600.5 554.2 L1602.5 554.3 L1604.5 554.4 L1606.5 554.4 L1608.5 554.5 L1610.5 554.6 L1612.6 554.7 L1614.6 554.8 L1616.6 554.9 L1618.6 555.0 L1620.6 555.1 L1622.7 555.2 L1624.7 555.3 L1626.7 555.4 L1628.7 555.5 L1630.7 555.6 L1632.8 555.7 L1634.8 555.8 L1636.8 555.9 L1638.8 556.0 L1640.8 556.0 L1642.9 556.1 L1644.9 556.2 L1646.9 556.3 L1648.9 556.4 L1650.9 556.5 L1653.0 556.6 L1655.0 556.7 L1657.0 556.8 L1659.0 556.9 L1661.0 556.9 L1663.1 557.0 L1665.1 557.1 L1667.1 557.1 L1669.1 557.2 L1671.2 557.3 L1673.2 557.4 L1675.2 557.4 L1677.2 557.5 L1679.2 557.6 L1681.3 557.6 L1683.3 557.7 L1685.3 557.8 L1687.3 557.8 L1689.3 557.9 L1691.4 558.0 L1693.4 558.1 L1695.4 558.1 L1697.4 558.2 L1699.5 558.3 L1701.5 558.3 L1703.5 558.4 L1705.5 558.5 L1707.5 558.5 L1709.6 558.6 L1711.6 558.7 L1713.6 558.7 L1715.6 558.8 L1717.7 558.9 L1719.7 559.0 L1721.7 559.0 L1723.7 559.1 L1725.7 559.2 L1727.8 559.2 L1729.8 559.3 L1731.8 559.4 L1733.8 559.4 L1735.8 559.5 L1737.9 559.6 L1739.9 559.7 L1741.9 559.7 L1743.9 559.8 L1746.0 559.9 L1748.0 559.9 L1750.0 560.0" fill="none" stroke="#f0922e" stroke-width="1.3" stroke-linejoin="round"/><path d="M3.0 963.0 L4.5 963.0 L6.1 963.0 L7.6 963.0 L9.1 963.0 L10.6 963.0 L12.2 963.0 L13.7 963.0 L15.2 963.0 L16.8 963.0 L18.3 963.0 L19.8 963.0 L21.4 963.0 L22.9 963.0 L24.4 963.0 L25.9 963.0 L27.5 963.0 L29.0 963.0 L30.5 963.0 L32.1 963.0 L33.6 963.0 L35.1 963.0 L36.6 963.0 L38.2 963.0 L39.7 963.0 L41.2 963.0 L42.8 963.0 L44.3 963.0 L45.8 963.0 L47.4 963.0 L48.9 963.0 L50.4 963.0 L51.9 963.0 L53.5 963.0 L55.0 963.0 L56.5 963.0 L58.0 963.0 L59.5 962.9 L61.0 962.9 L62.6 962.9 L64.1 962.9 L65.6 962.8 L67.1 962.8 L68.6 962.8 L70.1 962.8 L71.6 962.8 L73.1 962.7 L74.7 962.7 L76.2 962.7 L77.7 962.7 L79.2 962.7 L80.7 962.6 L82.2 962.6 L83.7 962.6 L85.2 962.6 L86.8 962.5 L88.3 962.5 L89.8 962.5 L91.3 962.5 L92.8 962.5 L94.3 962.4 L95.8 962.4 L97.3 962.4 L98.9 962.4 L100.4 962.4 L101.9 962.3 L103.4 962.3 L104.9 962.3 L106.4 962.3 L107.9 962.2 L109.4 962.2 L111.0 962.2 L112.5 962.2 L114.0 962.2 L115.5 962.1 L117.0 962.1 L118.5 962.1 L120.0 962.1 L121.5 962.0 L123.1 962.0 L124.6 962.0 L126.1 962.0 L127.6 962.0 L129.1 961.9 L130.6 961.9 L132.1 961.9 L133.6 961.9 L135.2 961.9 L136.7 961.8 L138.2 961.8 L139.7 961.8 L141.2 961.8 L142.7 961.7 L144.2 961.7 L145.7 961.7 L147.3 961.7 L148.8 961.7 L150.3 961.6 L151.8 961.6 L153.3 961.6 L154.8 961.6 L156.3 961.6 L157.8 961.5 L159.4 961.5 L160.9 961.5 L162.4 961.5 L163.9 961.4 L165.4 961.4 L166.9 961.4 L168.4 961.4 L169.9 961.4 L171.5 961.3 L173.0 961.3 L174.5 961.3 L176.0 961.3 L177.5 961.2 L179.1 960.3 L180.6 959.8 L182.2 958.6 L183.8 957.6 L185.3 956.4 L186.9 955.7 L188.4 954.7 L190.0 953.8 L191.5 953.6 L193.0 953.2 L194.5 952.2 L196.0 951.8 L197.5 950.9 L199.0 950.6 L200.5 949.8 L202.0 948.9 L203.5 948.4 L205.0 947.7 L206.5 947.6 L208.0 946.5 L209.5 945.9 L211.0 945.5 L212.5 945.1 L214.1 944.1 L215.7 943.3 L217.3 942.1 L218.9 941.5 L220.5 940.4 L222.0 940.0 L223.6 939.3 L225.2 938.5 L226.8 937.3 L228.4 935.9 L230.0 934.4 L231.5 933.4 L233.1 932.9 L234.6 932.2 L236.2 931.8 L237.7 931.1 L239.2 930.5 L240.8 929.1 L242.3 927.5 L243.8 926.4 L245.4 926.6 L246.9 926.3 L248.5 925.9 L250.0 925.7 L251.5 925.3 L253.1 924.0 L254.6 923.1 L256.2 922.1 L257.7 921.4 L259.3 920.9 L260.8 919.8 L262.4 919.2 L263.9 919.1 L265.5 918.2 L267.0 917.5 L268.6 916.3 L270.1 915.0 L271.7 913.7 L273.2 913.3 L274.8 912.8 L276.3 911.8 L277.9 911.1 L279.4 910.5 L281.0 910.2 L282.5 909.9 L284.0 909.8 L285.5 909.7 L287.1 909.4 L288.6 908.2 L290.1 907.5 L291.6 907.1 L293.1 906.3 L294.6 905.7 L296.2 904.8 L297.7 904.7 L299.2 904.3 L300.7 903.8 L302.2 903.1 L303.8 902.2 L305.3 902.2 L306.8 901.8 L308.3 902.0 L309.8 901.1 L311.3 899.9 L312.9 899.1 L314.4 898.6 L315.9 898.5 L317.4 897.8 L318.9 897.8 L320.4 897.4 L322.0 896.7 L323.5 896.2 L325.0 895.1 L326.5 894.4 L328.0 893.5 L329.5 892.2 L331.0 891.8 L332.5 892.2 L334.0 892.1 L335.5 891.6 L337.0 890.2 L338.5 890.0 L340.0 889.9 L341.5 889.6 L343.0 889.0 L344.5 888.7 L346.0 887.9 L347.5 887.3 L349.0 887.3 L350.5 886.5 L352.0 886.1 L353.5 885.5 L355.0 885.2 L356.5 884.7 L358.0 884.6 L359.5 884.0 L361.0 883.3 L362.5 882.4 L364.0 882.1 L365.5 881.5 L367.0 880.8 L368.5 880.2 L370.0 879.6 L371.5 879.6 L373.0 879.1 L374.6 879.0 L376.1 878.6 L377.6 877.9 L379.1 877.8 L380.7 877.1 L382.2 877.6 L383.7 877.4 L385.2 876.2 L386.7 876.5 L388.3 876.1 L389.8 875.7 L391.3 875.1 L392.8 873.9 L394.3 873.5 L395.9 872.7 L397.4 872.6 L398.9 872.8 L400.4 872.5 L402.0 871.9 L403.5 871.4 L405.0 871.5 L406.5 869.6 L408.1 869.6 L409.6 869.3 L411.2 868.8 L412.7 867.8 L414.2 866.9 L415.8 866.5 L417.3 866.4 L418.8 866.0 L420.4 865.8 L421.9 865.2 L423.5 865.2 L425.0 864.9 L426.5 864.8 L428.1 864.3 L429.6 863.9 L431.2 862.8 L432.7 862.1 L434.2 861.2 L435.8 860.7 L437.3 859.9 L438.8 859.3 L440.4 858.8 L441.9 858.4 L443.5 857.8 L445.0 857.7 L446.5 857.5 L448.0 857.7 L449.5 857.4 L451.0 858.1 L452.5 858.3 L454.0 857.9 L455.5 857.8 L457.0 857.9 L458.5 857.7 L460.0 857.8 L461.5 857.1 L463.1 856.5 L464.6 855.8 L466.2 855.7 L467.7 855.4 L469.2 855.7 L470.8 855.9 L472.3 855.7 L473.8 855.5 L475.4 855.2 L476.9 855.0 L478.5 854.5 L480.0 854.3 L481.5 853.4 L483.1 853.7 L484.6 853.1 L486.1 852.6 L487.6 852.0 L489.2 851.6 L490.7 850.5 L492.2 850.1 L493.8 849.3 L495.4 848.5 L497.1 847.5 L498.8 846.1 L500.5 844.8 L502.2 843.4 L503.7 843.3 L505.2 842.8 L506.7 842.5 L508.2 842.3 L509.7 842.0 L511.2 842.0 L512.8 842.1 L514.3 841.8 L515.8 841.3 L517.3 840.2 L518.8 840.2 L520.3 840.9 L521.8 841.3 L523.3 841.6 L524.8 841.7 L526.3 841.1 L527.8 840.7 L529.3 839.6 L530.8 839.5 L532.3 840.5 L533.9 839.6 L535.4 838.6 L536.9 838.6 L538.4 838.7 L539.9 838.2 L541.4 837.6 L542.9 836.8 L544.4 836.3 L545.9 837.0 L547.4 837.0 L549.0 837.1 L550.5 836.4 L552.0 836.2 L553.5 835.8 L555.1 835.6 L556.6 835.2 L558.1 835.2 L559.6 835.2 L561.2 835.0 L562.7 834.7 L564.2 834.6 L565.8 835.6 L567.3 834.6 L568.8 834.2 L570.3 834.2 L571.9 834.4 L573.4 833.8 L574.9 833.5 L576.4 833.2 L578.0 833.6 L579.5 833.9 L581.0 833.3 L582.5 832.9 L584.1 831.9 L585.6 831.4 L587.2 831.4 L588.7 830.7 L590.3 830.1 L591.8 829.3 L593.4 829.5 L594.9 829.7 L596.5 830.0 L598.0 829.7 L599.5 829.5 L601.1 829.8 L602.6 829.6 L604.2 828.9 L605.7 828.5 L607.3 828.1 L608.8 828.6 L610.4 829.0 L611.9 828.6 L613.6 827.2 L615.3 825.9 L616.9 825.3 L618.6 824.5 L620.3 823.9 L622.0 824.5 L623.7 824.9 L625.3 825.3 L627.0 826.3 L628.7 826.6 L630.4 825.8 L632.1 824.9 L633.8 823.9 L635.5 822.6 L637.2 821.7 L638.8 821.8 L640.3 822.3 L641.9 822.3 L643.4 822.1 L645.0 821.5 L646.5 821.7 L648.1 822.3 L649.6 822.8 L651.2 823.4 L652.7 823.3 L654.3 823.4 L655.8 823.1 L657.3 822.5 L658.9 821.6 L660.4 821.3 L662.0 820.5 L663.5 820.0 L665.0 819.4 L666.6 818.8 L668.1 818.4 L669.6 818.6 L671.2 818.3 L672.7 818.2 L674.3 818.6 L675.8 818.0 L677.4 817.1 L678.9 816.7 L680.5 816.4 L682.0 816.2 L683.5 816.2 L685.1 815.9 L686.6 815.5 L688.2 815.2 L689.7 815.2 L691.3 814.5 L692.8 813.9 L694.4 813.4 L695.9 813.4 L697.5 813.2 L699.0 812.9 L700.5 812.1 L702.0 811.9 L703.5 811.2 L705.1 810.9 L706.6 810.2 L708.1 809.9 L709.6 809.3 L711.1 808.4 L712.6 808.0 L714.2 807.9 L715.7 807.3 L717.2 806.8 L718.7 806.1 L720.3 806.4 L721.9 806.9 L723.5 807.2 L725.2 807.9 L726.8 807.9 L728.4 807.6 L730.0 808.2 L731.7 807.2 L733.4 806.3 L735.0 806.0 L736.7 805.3 L738.4 805.4 L740.0 805.2 L741.7 805.3 L743.3 805.4 L744.9 805.7 L746.6 806.1 L748.2 805.8 L750.0 803.9 L751.8 802.3 L753.5 801.9 L755.3 800.9 L756.9 800.6 L758.4 800.3 L760.0 800.5 L761.5 800.3 L763.1 800.0 L764.7 799.4 L766.2 799.0 L767.8 798.5 L769.3 798.7 L770.9 798.3 L772.5 797.8 L774.0 797.6 L775.6 797.2 L777.2 797.2 L778.7 797.0 L780.3 796.3 L781.8 796.3 L783.4 795.8 L785.1 796.4 L786.8 796.9 L788.4 796.9 L790.1 797.2 L791.8 797.2 L793.4 796.1 L794.9 795.4 L796.5 794.3 L798.1 792.9 L799.6 791.9 L801.2 791.0 L802.8 790.0 L804.3 789.5 L805.9 788.7 L807.6 789.7 L809.3 790.7 L810.9 791.5 L812.6 792.9 L814.3 793.8 L816.2 792.6 L818.1 791.1 L820.0 789.8 L821.5 789.7 L823.1 789.8 L824.6 789.6 L826.2 789.6 L827.7 789.6 L829.3 789.5 L830.8 789.3 L832.3 789.2 L833.9 789.2 L835.4 789.4 L837.0 789.5 L838.5 789.6 L840.0 789.8 L841.6 790.0 L843.1 790.0 L844.7 789.3 L846.2 789.5 L847.8 789.1 L849.3 789.5 L850.8 789.4 L852.4 789.5 L853.9 789.6 L855.5 789.6 L857.0 789.8 L858.5 789.6 L860.1 789.3 L861.6 789.0 L863.2 789.2 L864.7 789.4 L866.3 788.8 L867.8 788.8 L869.3 788.1 L870.8 787.8 L872.3 787.9 L873.8 788.4 L875.3 788.6 L876.8 788.8 L878.3 788.9 L879.9 788.8 L881.4 788.7 L882.9 788.6 L884.4 788.5 L885.9 788.6 L887.4 788.4 L888.9 788.4 L890.4 788.2 L891.9 788.6 L893.4 788.4 L894.9 788.4 L896.4 788.1 L897.9 788.1 L899.5 788.0 L901.0 787.6 L902.5 787.6 L904.0 787.1 L905.5 786.2 L907.0 785.7 L908.5 786.4 L910.0 787.0 L911.5 787.9 L913.0 788.2 L914.5 788.4 L916.0 788.6 L917.5 788.9 L919.0 789.4 L920.5 789.4 L922.0 789.7 L923.5 790.2 L925.0 790.6 L926.5 790.0 L928.0 789.8 L929.5 790.0 L931.0 790.9 L932.5 791.7 L934.3 789.7 L936.2 788.1 L938.0 787.4 L939.6 787.6 L941.1 787.3 L942.7 786.5 L944.3 786.5 L945.9 787.7 L947.4 788.2 L949.0 788.3 L950.6 788.1 L952.1 788.5 L953.7 788.5 L955.3 788.8 L956.9 788.4 L958.4 788.8 L960.0 788.9 L961.6 788.8 L963.2 788.7 L964.9 789.3 L966.5 789.5 L968.1 789.0 L969.7 788.4 L971.4 788.3 L973.0 788.2 L974.6 789.0 L976.1 789.0 L977.6 788.7 L979.1 788.4 L980.7 788.5 L982.2 788.7 L983.7 787.9 L985.2 787.2 L986.7 787.1 L988.2 786.4 L989.8 786.1 L991.3 785.9 L992.8 785.7 L994.3 785.4 L995.8 785.2 L997.3 784.9 L998.8 784.7 L1000.3 784.5 L1001.8 784.9 L1003.4 785.0 L1004.9 784.9 L1006.4 784.9 L1007.9 785.2 L1009.4 785.2 L1010.9 785.4 L1012.4 785.0 L1013.9 785.0 L1015.4 784.7 L1016.9 784.1 L1018.4 784.5 L1020.0 784.4 L1021.5 784.1 L1023.0 783.9 L1024.5 784.0 L1026.0 783.7 L1027.5 783.9 L1029.0 784.5 L1030.5 784.7 L1032.0 785.2 L1033.5 785.7 L1035.0 786.4 L1036.5 786.9 L1038.0 787.4 L1039.6 788.0 L1041.1 788.7 L1042.6 789.4 L1044.1 789.3 L1045.7 789.1 L1047.2 789.4 L1048.7 789.5 L1050.2 790.1 L1051.7 790.5 L1053.3 791.4 L1054.8 791.7 L1056.3 791.9 L1057.8 792.2 L1059.3 792.3 L1060.9 792.6 L1062.4 793.3 L1063.9 793.2 L1065.4 793.8 L1067.0 794.4 L1068.5 794.3 L1070.0 795.2 L1071.5 795.4 L1073.1 795.5 L1074.6 795.9 L1076.2 796.3 L1077.7 796.6 L1079.2 797.0 L1080.8 797.1 L1082.3 797.6 L1083.8 798.3 L1085.4 798.1 L1086.9 798.3 L1088.5 798.5 L1090.0 799.2 L1091.7 799.9 L1093.3 800.3 L1095.0 801.0 L1096.6 800.7 L1098.3 800.4 L1099.9 802.1 L1101.5 803.5 L1103.2 805.3 L1104.8 807.2 L1106.7 806.1 L1108.5 805.0 L1110.3 803.6 L1112.2 802.7 L1113.8 803.5 L1115.3 804.1 L1116.9 805.3 L1118.5 806.7 L1120.1 808.0 L1121.7 809.6 L1123.3 811.8 L1124.9 812.0 L1126.5 812.2 L1128.2 811.9 L1129.8 813.0 L1131.7 814.6 L1133.5 816.0 L1134.4 817.0 L1135.4 835.6 L1135.9 904.0 L1137.8 917.0 L1140.0 926.3 L1141.8 931.0 L1143.7 935.6 L1145.6 938.7 L1147.4 941.7 L1149.3 944.8 L1151.1 946.7 L1153.0 948.5 L1154.8 950.4 L1156.3 951.2 L1157.9 951.9 L1159.4 952.7 L1160.9 953.5 L1162.5 954.2 L1164.0 955.0 L1165.5 955.5 L1167.1 955.9 L1168.7 956.4 L1170.2 956.9 L1171.8 957.3 L1173.3 957.8 L1174.9 958.0 L1176.5 958.2 L1178.2 958.4 L1179.8 958.5 L1181.4 958.7 L1183.0 958.9 L1184.7 959.1 L1186.3 959.3 L1187.8 959.3 L1189.3 959.3 L1190.8 959.4 L1192.3 959.4 L1193.8 959.4 L1195.3 959.4 L1196.8 959.4 L1198.3 959.5 L1199.9 959.5 L1201.4 959.5 L1202.9 959.5 L1204.4 959.5 L1205.9 959.5 L1207.4 959.6 L1208.9 959.6 L1210.4 959.6 L1211.9 959.6 L1213.4 959.6 L1215.0 959.7 L1216.5 959.7 L1218.0 959.7 L1219.5 959.7 L1221.1 959.8 L1222.6 959.8 L1224.1 959.8 L1225.6 959.8 L1227.2 959.9 L1228.7 959.9 L1230.2 959.9 L1231.7 959.9 L1233.2 959.9 L1234.8 960.0 L1236.3 960.0 L1237.8 960.0 L1239.3 960.0 L1240.9 960.1 L1242.4 960.1 L1243.9 960.1 L1245.4 960.1 L1247.0 960.2 L1248.5 960.2 L1250.0 960.2 L1251.5 960.2 L1253.0 960.2 L1254.5 960.2 L1256.0 960.2 L1257.5 960.1 L1259.0 960.1 L1260.6 960.1 L1262.1 960.1 L1263.6 960.1 L1265.1 960.1 L1266.6 960.1 L1268.1 960.1 L1269.6 960.1 L1271.1 960.0 L1272.6 960.0 L1274.1 960.0 L1275.6 960.0 L1277.1 960.0 L1278.7 960.0 L1280.2 960.0 L1281.7 960.0 L1283.2 959.9 L1284.7 959.9 L1286.2 959.9 L1287.7 959.9 L1289.2 959.9 L1290.7 959.9 L1292.2 959.9 L1293.7 959.9 L1295.2 959.9 L1296.7 959.8 L1298.3 959.8 L1299.8 959.8 L1301.3 959.8 L1302.8 959.8 L1304.3 959.8 L1305.8 959.8 L1307.3 959.8 L1308.8 959.8 L1310.3 959.7 L1311.8 959.7 L1313.3 959.7 L1314.8 959.7 L1316.3 959.7 L1317.9 959.7 L1319.4 959.7 L1320.9 959.7 L1322.4 959.6 L1323.9 959.6 L1325.4 959.6 L1326.9 959.6 L1328.4 959.6 L1329.9 959.6 L1331.4 959.6 L1332.9 959.6 L1334.4 959.6 L1336.0 959.5 L1337.5 959.5 L1339.0 959.5 L1340.5 959.5 L1342.0 959.5 L1343.5 959.5 L1345.0 959.5 L1346.5 959.5 L1348.0 959.5 L1349.5 959.4 L1351.0 959.4 L1352.5 959.4 L1354.0 959.4 L1355.6 959.4 L1357.1 959.4 L1358.6 959.4 L1360.1 959.4 L1361.6 959.3 L1363.1 959.3 L1364.6 959.3 L1366.1 959.3 L1367.6 959.3 L1369.1 959.3 L1370.6 959.3 L1372.1 959.3 L1373.7 959.3 L1375.2 959.2 L1376.7 959.2 L1378.2 959.2 L1379.7 959.2 L1381.2 959.2 L1382.7 959.2 L1384.2 959.2 L1385.7 959.2 L1387.2 959.2 L1388.7 959.1 L1390.2 959.1 L1391.7 959.1 L1393.3 959.1 L1394.8 959.1 L1396.3 959.1 L1397.8 959.1 L1399.3 959.1 L1400.8 959.0 L1402.3 959.0 L1403.8 959.0 L1405.3 959.0 L1406.8 959.0 L1408.3 959.0 L1409.8 959.0 L1411.3 959.0 L1412.9 959.0 L1414.4 958.9 L1415.9 958.9 L1417.4 958.9 L1418.9 958.9 L1420.4 958.9 L1421.9 958.9 L1423.4 958.9 L1424.9 958.9 L1426.4 958.9 L1427.9 958.8 L1429.4 958.8 L1431.0 958.8 L1432.5 958.8 L1434.0 958.8 L1435.5 958.8 L1437.0 958.8 L1438.5 958.8 L1440.0 958.8 L1441.5 958.7 L1443.0 958.7 L1444.5 958.6 L1446.0 958.6 L1447.5 958.6 L1449.0 958.5 L1450.5 958.5 L1452.0 958.5 L1453.5 958.4 L1455.0 958.4 L1456.5 958.3 L1458.0 958.3 L1459.5 958.3 L1461.0 958.2 L1462.5 958.2 L1464.0 958.1 L1465.5 958.1 L1467.0 958.1 L1468.5 958.0 L1470.0 958.0 L1471.5 958.0 L1473.0 957.9 L1474.5 957.9 L1476.0 957.9 L1477.5 957.8 L1479.0 957.8 L1480.5 957.7 L1482.0 957.7 L1483.5 957.7 L1485.0 957.6 L1486.5 957.6 L1488.0 957.5 L1489.5 957.5 L1491.0 957.5 L1492.5 957.4 L1494.0 957.4 L1495.5 957.4 L1497.0 957.3 L1498.5 957.3 L1500.0 957.2 L1501.5 957.2 L1503.0 957.2 L1504.5 957.1 L1506.0 957.1 L1507.5 957.1 L1509.0 957.0 L1510.5 957.0 L1512.0 957.0 L1513.5 956.9 L1515.0 956.9 L1516.5 956.8 L1518.0 956.8 L1519.5 956.8 L1521.0 956.7 L1522.5 956.7 L1524.0 956.6 L1525.5 956.6 L1527.0 956.6 L1528.5 956.5 L1530.0 956.5 L1531.5 956.5 L1533.0 956.5 L1534.5 956.5 L1536.0 956.4 L1537.5 956.4 L1539.0 956.4 L1540.5 956.4 L1542.1 956.4 L1543.6 956.4 L1545.1 956.4 L1546.6 956.3 L1548.1 956.3 L1549.6 956.3 L1551.1 956.3 L1552.6 956.3 L1554.1 956.3 L1555.6 956.3 L1557.1 956.3 L1558.6 956.2 L1560.1 956.2 L1561.6 956.2 L1563.2 956.2 L1564.7 956.2 L1566.2 956.2 L1567.7 956.2 L1569.2 956.1 L1570.7 956.1 L1572.2 956.1 L1573.7 956.1 L1575.2 956.1 L1576.7 956.1 L1578.2 956.1 L1579.7 956.0 L1581.2 956.0 L1582.7 956.0 L1584.2 956.0 L1585.8 956.0 L1587.3 956.0 L1588.8 956.0 L1590.3 956.0 L1591.8 955.9 L1593.3 955.9 L1594.8 955.9 L1596.3 955.9 L1597.8 955.9 L1599.3 955.9 L1600.8 955.9 L1602.3 955.8 L1603.8 955.8 L1605.3 955.8 L1606.8 955.8 L1608.4 955.8 L1609.9 955.8 L1611.4 955.8 L1612.9 955.7 L1614.4 955.7 L1615.9 955.7 L1617.4 955.7 L1618.9 955.7 L1620.4 955.7 L1621.9 955.7 L1623.4 955.7 L1624.9 955.6 L1626.4 955.6 L1627.9 955.6 L1629.5 955.6 L1631.0 955.6 L1632.5 955.6 L1634.0 955.6 L1635.5 955.5 L1637.0 955.5 L1638.5 955.5 L1640.0 955.5 L1641.5 955.5 L1643.0 955.5 L1644.5 955.5 L1646.0 955.4 L1647.5 955.4 L1649.0 955.4 L1650.5 955.4 L1652.0 955.4 L1653.5 955.4 L1655.0 955.4 L1656.5 955.4 L1658.0 955.3 L1659.5 955.3 L1661.0 955.3 L1662.5 955.3 L1664.0 955.3 L1665.5 955.3 L1667.0 955.3 L1668.5 955.2 L1670.0 955.2 L1671.5 955.2 L1673.0 955.2 L1674.5 955.2 L1676.0 955.2 L1677.5 955.2 L1679.0 955.1 L1680.5 955.1 L1682.0 955.1 L1683.5 955.1 L1685.0 955.1 L1686.5 955.1 L1688.0 955.1 L1689.5 955.1 L1691.0 955.0 L1692.5 955.0 L1694.0 955.0 L1695.5 955.0 L1697.0 955.0 L1698.5 955.0 L1700.0 955.0 L1701.5 954.9 L1703.0 954.9 L1704.5 954.9 L1706.0 954.9 L1707.5 954.9 L1709.0 954.9 L1710.5 954.9 L1712.0 954.9 L1713.5 954.8 L1715.0 954.8 L1716.5 954.8 L1718.0 954.8 L1719.5 954.8 L1721.0 954.8 L1722.5 954.8 L1724.0 954.7 L1725.5 954.7 L1727.0 954.7 L1728.5 954.7 L1730.0 954.7 L1731.5 954.7 L1733.0 954.7 L1734.5 954.6 L1736.0 954.6 L1737.5 954.6 L1739.0 954.6 L1740.5 954.6 L1742.0 954.6 L1743.5 954.6 L1745.0 954.6 L1746.5 954.5 L1748.0 954.5 L1749.5 954.5 L1751.0 954.5" fill="none" stroke="#8a3ab0" stroke-width="1.3" stroke-linejoin="round"/><path d="M3.0 265.5 L5.0 265.5 L7.0 265.5 L9.1 265.5 L11.1 265.5 L13.1 265.5 L15.1 265.5 L17.1 265.5 L19.2 265.5 L21.2 265.5 L23.2 265.5 L25.2 265.5 L27.2 265.5 L29.2 265.5 L31.3 265.5 L33.3 265.5 L35.3 265.5 L37.3 265.5 L39.3 265.5 L41.4 265.5 L43.4 265.5 L45.4 265.5 L47.4 265.5 L49.4 265.5 L51.5 265.5 L53.5 265.5 L55.5 265.5 L56.0 261.0 L56.5 270.0 L57.0 263.0 L58.0 264.8 L60.8 264.8 L63.5 264.8 L64.4 256.2 L65.0 269.0 L65.6 262.0 L66.2 261.0 L68.8 258.0 L71.2 255.0 L73.3 253.1 L75.4 251.3 L77.5 249.4 L79.6 248.1 L81.7 246.9 L83.8 245.6 L85.8 244.4 L87.9 243.1 L90.0 241.9 L92.5 240.6 L95.0 239.4 L97.5 238.1 L99.5 237.5 L101.5 236.9 L103.5 236.2 L105.5 235.6 L107.5 235.0 L110.0 234.1 L112.5 233.2 L115.0 232.2 L117.0 231.7 L119.0 231.1 L121.0 230.5 L123.0 230.0 L125.0 229.4 L127.1 228.9 L129.2 228.4 L131.2 227.9 L133.3 227.5 L135.4 227.0 L137.5 226.5 L139.6 226.2 L141.7 225.8 L143.8 225.4 L145.8 225.1 L147.9 224.8 L150.0 224.4 L152.3 224.1 L154.6 223.8 L156.9 223.4 L159.2 223.1 L161.5 222.8 L163.8 222.5 L166.0 222.3 L168.2 222.1 L170.5 221.9 L172.8 221.7 L175.0 221.5 L177.5 221.7 L180.0 221.9 L182.5 223.1 L185.0 225.0 L187.5 226.9 L190.0 227.6 L192.5 228.3 L195.0 229.0 L197.3 229.3 L199.6 229.5 L201.9 229.8 L204.2 230.1 L206.5 230.3 L208.8 230.6 L210.8 231.0 L212.9 231.3 L215.0 231.7 L217.1 232.0 L219.2 232.4 L221.2 232.8 L223.3 233.3 L225.4 233.9 L227.5 234.5 L229.6 235.1 L231.7 235.7 L233.8 236.2 L235.8 236.6 L237.9 237.0 L240.0 237.4 L242.1 237.8 L244.2 238.1 L246.2 238.5 L248.3 238.6 L250.4 238.6 L252.5 238.7 L254.6 238.7 L256.7 238.8 L258.8 238.8 L260.8 238.9 L262.9 238.9 L265.0 239.0 L267.1 239.1 L269.3 239.3 L271.4 239.4 L273.6 239.6 L275.7 239.7 L277.9 239.9 L280.0 240.0 L280.0 240.0 L281.7 240.0 L283.3 240.6 L285.0 241.1 L286.5 241.0 L288.0 240.8 L289.5 241.2 L291.0 241.3 L292.6 240.8 L294.1 240.2 L295.6 240.0 L297.1 240.8 L298.6 240.1 L300.1 240.8 L301.6 240.7 L303.1 240.4 L304.7 240.8 L306.2 240.0 L307.7 239.9 L309.2 240.2 L310.7 240.0 L312.2 240.7 L313.7 240.1 L315.2 240.0 L316.7 239.2 L318.3 239.0 L319.8 238.1 L321.3 238.3 L322.8 239.0 L324.3 239.8 L325.8 240.5 L327.3 240.3 L328.8 240.6 L330.3 240.6 L331.9 239.6 L333.4 239.4 L334.9 239.8 L336.4 240.0 L337.9 239.5 L339.4 239.5 L340.9 240.2 L342.4 241.8 L344.0 240.2 L345.5 239.7 L347.0 239.8 L348.5 239.4 L350.0 239.8 L351.5 239.8 L353.0 239.0 L354.5 239.8 L356.1 239.6 L357.6 239.0 L359.1 239.2 L360.6 239.3 L362.1 239.4 L363.6 238.8 L365.2 238.8 L366.7 239.1 L368.2 239.0 L369.7 239.0 L371.2 237.6 L372.7 237.4 L374.2 237.8 L375.8 238.5 L377.3 238.2 L378.8 237.8 L380.3 238.1 L381.8 237.9 L383.3 238.5 L384.8 238.5 L386.4 238.5 L387.9 238.0 L389.4 238.2 L390.9 237.9 L392.4 238.4 L393.9 238.3 L395.5 237.7 L397.0 237.2 L398.5 237.5 L400.0 237.5 L401.5 237.4 L403.0 236.9 L404.5 236.4 L406.0 237.2 L407.5 237.0 L409.0 238.3 L410.5 238.2 L412.0 238.8 L413.5 239.1 L415.0 237.9 L416.5 237.4 L418.0 237.2 L419.5 237.1 L421.0 237.1 L422.5 236.9 L424.0 236.6 L425.5 235.8 L427.0 235.7 L428.5 235.2 L430.0 235.7 L431.5 236.4 L433.0 235.6 L434.5 234.8 L436.0 234.4 L437.5 235.4 L439.0 236.5 L440.5 236.2 L442.0 235.9 L443.5 235.9 L445.0 236.3 L446.5 236.7 L448.0 236.6 L449.5 237.3 L451.0 236.8 L452.5 235.8 L454.0 236.0 L455.5 235.9 L457.0 236.5 L458.5 236.8 L460.0 236.7 L461.5 235.8 L463.1 236.8 L464.6 236.9 L466.2 236.2 L467.7 235.6 L469.2 235.3 L470.8 235.1 L472.3 235.0 L473.8 234.1 L475.4 234.3 L476.9 234.3 L478.5 235.1 L480.0 235.6 L481.5 235.7 L483.1 236.1 L484.6 235.6 L486.2 235.7 L487.7 236.1 L489.2 236.0 L490.8 235.0 L492.3 235.5 L493.8 236.1 L495.4 236.6 L496.9 237.1 L498.5 236.5 L500.0 237.3 L501.5 236.4 L503.1 235.7 L504.6 234.8 L506.2 234.4 L507.7 234.0 L509.2 234.6 L510.8 235.3 L512.3 235.1 L513.8 234.3 L515.4 232.4 L516.9 234.2 L518.5 234.5 L520.0 234.2 L521.5 234.5 L523.0 234.4 L524.5 234.3 L526.0 234.4 L527.5 234.4 L529.0 234.0 L530.5 234.1 L532.0 234.5 L533.5 234.5 L535.0 234.4 L536.5 234.7 L538.0 234.8 L539.5 235.4 L541.0 234.5 L542.5 234.5 L544.0 233.8 L545.5 233.1 L547.0 231.9 L548.5 232.6 L550.0 233.9 L551.5 234.0 L553.0 234.7 L554.5 234.4 L556.0 232.9 L557.5 232.6 L559.0 233.9 L560.5 233.9 L562.0 233.8 L563.5 234.4 L565.0 234.1 L566.5 234.4 L568.0 233.7 L569.5 233.5 L571.0 233.4 L572.5 232.4 L574.0 232.7 L575.5 233.5 L577.0 234.1 L578.5 234.4 L580.0 233.7 L581.5 233.9 L583.0 234.1 L584.5 233.8 L586.1 233.5 L587.6 232.5 L589.1 232.8 L590.6 233.2 L592.1 233.1 L593.6 233.5 L595.2 233.4 L596.7 233.4 L598.2 232.7 L599.7 231.9 L601.2 231.0 L602.7 231.3 L604.2 232.2 L605.8 232.8 L607.3 232.5 L608.8 232.4 L610.3 233.2 L611.8 232.7 L613.3 232.9 L614.8 232.4 L616.4 231.9 L617.9 231.1 L619.4 231.5 L620.9 232.4 L622.4 231.9 L623.9 232.4 L625.5 232.5 L627.0 231.8 L628.5 232.0 L630.0 231.6 L631.5 230.7 L633.1 231.0 L634.6 231.7 L636.2 232.3 L637.7 232.0 L639.2 232.8 L640.8 232.8 L642.3 232.8 L643.8 232.7 L645.4 232.2 L646.9 231.8 L648.5 232.3 L650.0 232.7 L651.5 233.5 L653.0 233.3 L654.5 232.7 L656.1 233.2 L657.6 233.0 L659.1 233.2 L660.6 233.4 L662.1 233.2 L663.6 233.8 L665.2 233.3 L666.7 232.7 L668.2 232.2 L669.7 232.0 L671.2 232.3 L672.7 233.5 L674.2 233.8 L675.8 234.6 L677.3 234.9 L678.8 234.2 L680.3 234.2 L681.8 234.2 L683.3 234.3 L684.8 234.5 L686.4 235.0 L687.9 234.3 L689.4 234.0 L690.9 234.4 L692.4 234.3 L693.9 234.3 L695.5 234.3 L697.0 234.9 L698.5 234.9 L700.0 236.0 L701.5 236.3 L703.1 235.7 L704.6 234.8 L706.2 235.5 L707.7 235.9 L709.2 235.7 L710.8 236.0 L712.3 235.7 L713.8 235.8 L715.4 235.9 L716.9 236.1 L718.5 236.8 L720.0 237.9 L721.6 238.4 L723.1 238.7 L724.7 237.6 L726.2 237.0 L727.8 236.8 L729.4 235.8 L730.9 235.3 L732.5 235.0 L734.1 235.9 L735.6 236.4 L737.2 235.7 L738.8 236.4 L740.3 235.6 L741.9 235.4 L743.4 234.5 L745.0 234.2 L746.5 234.8 L748.0 234.9 L749.5 235.6 L751.0 234.5 L752.5 234.0 L754.0 234.5 L755.5 235.2 L757.0 236.1 L758.5 237.5 L760.0 238.0 L761.5 238.2 L763.1 238.2 L764.6 237.5 L766.2 237.1 L767.7 237.4 L769.2 237.4 L770.8 237.9 L772.3 239.4 L773.8 239.5 L775.4 239.3 L776.9 238.7 L778.5 238.2 L780.0 238.7 L781.5 237.8 L783.1 238.3 L784.6 239.5 L786.2 239.2 L787.7 239.4 L789.2 240.0 L790.8 238.5 L792.3 238.2 L793.8 240.1 L795.4 240.3 L796.9 240.2 L798.5 240.2 L800.0 239.4 L801.5 238.3 L803.1 238.4 L804.6 239.5 L806.2 240.0 L807.7 240.2 L809.2 240.4 L810.8 241.3 L812.3 240.5 L813.8 240.1 L815.4 239.6 L816.9 238.8 L818.5 238.4 L820.0 238.6 L821.5 238.4 L823.0 238.8 L824.5 238.6 L826.1 239.0 L827.6 238.9 L829.1 238.6 L830.6 236.2 L832.1 236.6 L833.6 238.9 L835.2 238.8 L836.7 238.6 L838.2 238.4 L839.7 238.3 L841.2 238.7 L842.7 239.1 L844.2 239.7 L845.8 240.3 L847.3 240.2 L848.8 239.0 L850.3 238.3 L851.8 238.5 L853.3 238.5 L854.8 238.6 L856.4 238.0 L857.9 238.1 L859.4 238.3 L860.9 238.4 L862.4 238.6 L863.9 239.0 L865.5 240.4 L867.0 239.4 L868.5 238.5 L870.0 239.0 L871.5 239.1 L873.0 239.2 L874.5 238.7 L876.0 238.4 L877.6 238.0 L879.1 238.1 L880.6 238.4 L882.1 238.4 L883.6 237.8 L885.1 238.0 L886.6 238.8 L888.1 238.6 L889.7 238.5 L891.2 237.8 L892.7 237.7 L894.2 237.5 L895.7 238.0 L897.2 237.3 L898.7 237.2 L900.2 237.1 L901.7 236.3 L903.3 236.8 L904.8 237.2 L906.3 237.6 L907.8 237.3 L909.3 237.3 L910.8 237.4 L912.3 238.5 L913.8 238.1 L915.3 237.9 L916.9 237.9 L918.4 237.4 L919.9 237.3 L921.4 237.3 L922.9 238.1 L924.4 237.8 L925.9 237.5 L927.4 237.5 L929.0 236.5 L930.5 236.5 L932.0 236.7 L933.5 236.3 L935.0 235.6 L936.6 235.5 L938.1 236.2 L939.7 237.0 L941.2 237.1 L942.8 237.1 L944.4 237.4 L945.9 236.6 L947.5 236.2 L949.1 236.7 L950.6 237.7 L952.2 238.3 L953.8 239.0 L955.3 239.0 L956.9 239.6 L958.4 240.2 L960.0 241.3 L961.5 241.1 L963.1 240.1 L964.6 239.9 L966.2 239.5 L967.7 239.5 L969.2 239.5 L970.8 239.7 L972.3 239.8 L973.8 240.5 L975.4 240.4 L976.9 239.8 L978.5 240.0 L980.0 239.8 L981.5 239.5 L983.1 240.5 L984.6 241.1 L986.2 240.7 L987.7 239.8 L989.2 238.9 L990.8 238.1 L992.3 237.3 L993.8 238.4 L995.4 239.0 L996.9 240.0 L998.5 239.6 L1000.0 240.0 L1001.6 240.1 L1003.1 239.0 L1004.7 238.8 L1006.2 240.4 L1007.8 241.5 L1009.3 241.3 L1010.9 242.1 L1012.4 241.9 L1014.0 242.8 L1015.6 243.0 L1017.1 243.0 L1018.7 243.2 L1020.2 243.9 L1021.8 243.9 L1023.3 244.4 L1024.9 244.3 L1026.4 244.6 L1028.0 245.4 L1029.5 244.7 L1031.0 242.7 L1032.5 240.8 L1034.0 241.7 L1035.5 242.6 L1037.0 242.3 L1038.5 240.8 L1040.0 240.1 L1041.5 239.4 L1043.0 240.1 L1044.5 240.8 L1046.0 241.5 L1047.5 241.9 L1049.0 242.1 L1050.5 241.8 L1052.0 241.6 L1053.5 241.7 L1055.0 241.6 L1056.5 241.0 L1058.0 240.7 L1059.5 240.1 L1061.0 241.0 L1062.5 241.6 L1064.0 241.4 L1065.5 241.5 L1067.0 241.6 L1068.5 241.9 L1070.0 241.7 L1071.5 241.8 L1073.0 240.8 L1074.6 241.3 L1076.1 241.1 L1077.6 241.5 L1079.1 241.5 L1080.7 240.8 L1082.2 240.9 L1083.7 241.6 L1085.2 241.9 L1086.7 242.3 L1088.3 241.0 L1089.8 240.6 L1091.3 240.1 L1092.8 239.5 L1094.3 239.0 L1095.9 238.8 L1097.4 238.8 L1098.9 238.8 L1100.4 239.3 L1102.0 239.8 L1103.5 240.1 L1105.0 240.1 L1106.6 239.6 L1108.2 239.8 L1109.8 240.5 L1111.4 240.6 L1113.0 240.8 L1114.5 241.2 L1116.0 241.2 L1117.5 240.6 L1119.0 240.0 L1120.5 239.2 L1122.0 237.6 L1123.5 236.4 L1125.0 235.4 L1126.6 235.7 L1128.2 235.6 L1129.8 235.4 L1131.5 235.4 L1133.1 235.2 L1134.7 235.0 L1134.7 235.3 L1134.7 211.7 L1135.4 136.7 L1136.4 128.3 L1137.8 133.9 L1139.2 136.7 L1141.2 142.9 L1143.3 149.2 L1145.4 156.8 L1147.5 164.4 L1149.6 172.8 L1151.7 181.1 L1153.8 189.4 L1155.8 197.8 L1158.6 206.1 L1161.4 214.4 L1164.2 221.7 L1166.9 229.0 L1169.0 231.9 L1171.1 234.9 L1173.2 237.9 L1175.3 240.8 L1177.7 243.2 L1180.2 245.7 L1182.6 248.2 L1185.0 250.6 L1187.3 251.5 L1189.6 252.4 L1192.0 253.4 L1194.3 254.3 L1196.6 255.2 L1198.9 256.1 L1201.0 256.2 L1203.1 256.4 L1205.2 256.5 L1207.2 256.6 L1209.3 256.8 L1211.4 256.9 L1213.5 257.1 L1215.6 257.2 L1217.7 257.2 L1219.7 257.2 L1221.8 257.2 L1223.8 257.2 L1225.9 257.3 L1227.9 257.3 L1230.0 257.3 L1232.0 257.3 L1234.1 257.3 L1236.1 257.3 L1238.2 257.3 L1240.2 257.3 L1242.3 257.4 L1244.3 257.4 L1246.4 257.4 L1248.4 257.4 L1250.5 257.4 L1252.5 257.4 L1254.6 257.4 L1256.6 257.4 L1258.7 257.5 L1260.7 257.5 L1262.8 257.5 L1264.8 257.5 L1266.9 257.5 L1269.4 258.2 L1271.8 258.9 L1274.2 259.6 L1276.7 260.3 L1278.9 260.3 L1281.1 260.3 L1283.3 260.3 L1285.6 260.3 L1287.8 260.3 L1290.0 260.3 L1292.0 260.3 L1294.0 260.3 L1296.0 260.3 L1298.0 260.3 L1300.0 260.2 L1302.0 260.2 L1304.0 260.2 L1306.0 260.2 L1308.0 260.2 L1310.0 260.2 L1312.0 260.2 L1314.0 260.2 L1316.0 260.1 L1318.0 260.1 L1320.0 260.1 L1322.0 260.1 L1324.0 260.1 L1326.0 260.1 L1328.0 260.1 L1330.0 260.1 L1332.0 260.0 L1334.0 260.0 L1336.0 260.0 L1338.0 260.0 L1340.0 260.0 L1342.0 259.9 L1344.0 259.7 L1346.0 259.6 L1348.0 259.5 L1350.0 259.4 L1352.0 259.2 L1354.0 259.1 L1356.0 259.0 L1358.0 258.8 L1360.0 258.7 L1362.0 258.7 L1364.0 258.7 L1366.0 258.7 L1368.0 258.7 L1370.0 258.7 L1372.0 258.7 L1374.0 258.7 L1376.0 258.7 L1378.0 258.7 L1380.0 258.7 L1382.0 258.7 L1384.0 258.7 L1386.0 258.7 L1388.0 258.7 L1390.0 258.7 L1392.0 258.7 L1394.0 258.7 L1396.0 258.7 L1398.0 258.7 L1400.0 258.7 L1402.0 258.7 L1404.0 258.7 L1406.0 258.7 L1408.0 258.7 L1410.0 258.7 L1412.0 258.7 L1414.0 258.7 L1416.0 258.7 L1418.0 258.7 L1420.0 258.7 L1422.0 258.7 L1424.0 258.7 L1426.0 258.7 L1428.0 258.7 L1430.0 258.7 L1432.0 258.7 L1434.0 258.7 L1436.0 258.7 L1438.0 258.7 L1440.0 258.7 L1442.0 259.2 L1444.0 259.6 L1446.0 260.1 L1448.0 260.5 L1450.0 261.0 L1452.0 261.1 L1454.0 261.1 L1456.0 261.2 L1458.0 261.3 L1460.0 261.3 L1462.0 261.4 L1464.0 261.5 L1466.0 261.5 L1468.0 261.6 L1470.0 261.7 L1472.0 261.7 L1474.0 261.8 L1476.0 261.9 L1478.0 261.9 L1480.0 262.0 L1482.0 262.0 L1484.0 262.0 L1486.0 262.1 L1488.0 262.1 L1490.0 262.1 L1492.0 262.1 L1494.0 262.1 L1496.0 262.1 L1498.0 262.1 L1500.0 262.2 L1502.0 262.2 L1504.0 262.2 L1506.0 262.2 L1508.0 262.2 L1510.0 262.2 L1512.0 262.3 L1514.0 262.3 L1516.0 262.3 L1518.0 262.3 L1520.0 262.3 L1522.0 262.4 L1524.0 262.4 L1526.0 262.4 L1528.0 262.4 L1530.0 262.4 L1532.0 262.4 L1534.0 262.4 L1536.0 262.5 L1538.0 262.5 L1540.0 262.5 L1542.0 262.3 L1544.0 262.1 L1546.0 262.0 L1548.0 261.8 L1550.0 261.6 L1552.0 261.4 L1554.0 261.3 L1556.0 261.1 L1558.0 260.9 L1560.0 260.8 L1562.0 260.6 L1564.0 260.4 L1566.0 260.2 L1568.0 260.1 L1570.0 259.9 L1572.0 259.7 L1574.0 259.5 L1576.0 259.4 L1578.0 259.2 L1580.0 259.0 L1582.0 258.9 L1584.0 258.9 L1586.0 258.8 L1588.0 258.7 L1590.0 258.6 L1592.0 258.6 L1594.0 258.5 L1596.0 258.4 L1598.0 258.3 L1600.0 258.2 L1602.0 258.2 L1604.0 258.1 L1606.0 258.0 L1608.0 257.9 L1610.0 257.9 L1612.0 257.8 L1614.0 257.7 L1616.0 257.6 L1618.0 257.6 L1620.0 257.5 L1622.0 257.6 L1624.0 257.7 L1626.0 257.8 L1628.0 257.8 L1630.0 257.9 L1632.0 258.0 L1634.0 258.1 L1636.0 258.2 L1638.0 258.2 L1640.0 258.3 L1642.0 258.4 L1644.0 258.5 L1646.0 258.6 L1648.0 258.7 L1650.0 258.8 L1652.0 258.8 L1654.0 258.9 L1656.0 259.0 L1658.0 259.1 L1660.0 259.2 L1662.0 259.2 L1664.0 259.3 L1666.0 259.4 L1668.0 259.5 L1670.0 259.6 L1672.0 259.7 L1674.0 259.8 L1676.0 259.8 L1678.0 259.9 L1680.0 260.0 L1682.0 260.0 L1684.0 260.0 L1686.0 260.0 L1688.0 260.0 L1690.0 260.0 L1692.0 260.0 L1694.0 260.0 L1696.0 260.0 L1698.0 260.0 L1700.0 260.0 L1702.0 260.0 L1704.1 260.0 L1706.1 259.9 L1708.2 259.9 L1710.2 259.9 L1712.2 259.9 L1714.3 259.9 L1716.3 259.8 L1718.4 259.8 L1720.4 259.8 L1722.4 259.8 L1724.5 259.8 L1726.5 259.7 L1728.6 259.7 L1730.6 259.7 L1732.6 259.7 L1734.7 259.7 L1736.7 259.6 L1738.8 259.6 L1740.8 259.6 L1742.8 259.6 L1744.9 259.6 L1746.9 259.5 L1749.0 259.5 L1751.0 259.5" fill="none" stroke="#f4ec0a" stroke-width="1.8" stroke-linejoin="round"/></g><path d="M9 161.5 H78 L83.5 174.5 L78 187.5 H9 Q6 187.5 6 184.5 V164.5 Q6 161.5 9 161.5 Z" fill="#1c1a08" stroke="#ece01c" stroke-width="2"/><line x1="33" y1="161.5" x2="33" y2="187.5" stroke="#ece01c" stroke-width="2"/><text x="19.00" y="178.80" font-size="12.5" fill="#ece01c" text-anchor="middle">C 1</text><text x="57.50" y="178.80" font-size="12.5" fill="#ece01c" text-anchor="middle">20 V</text><text x="102.00" y="178.96" font-size="18.5" fill="#ece01c" textLength="96" lengthAdjust="spacingAndGlyphs">U_loop,coil</text><path d="M9 395.5 H78 L83.5 408.5 L78 421.5 H9 Q6 421.5 6 418.5 V398.5 Q6 395.5 9 395.5 Z" fill="#141c08" stroke="#8cc63f" stroke-width="2"/><line x1="33" y1="395.5" x2="33" y2="421.5" stroke="#8cc63f" stroke-width="2"/><text x="19.00" y="412.80" font-size="12.5" fill="#8cc63f" text-anchor="middle">C 4</text><text x="57.50" y="412.80" font-size="12.5" fill="#8cc63f" text-anchor="middle">200 mV</text><text x="102.00" y="411.96" font-size="18.5" fill="#8cc63f" textLength="86" lengthAdjust="spacingAndGlyphs">U_Photod</text><line x1="3" y1="734.8" x2="56" y2="734.8" stroke="#f0922e" stroke-width="1.3"/><path d="M8.5 722.5 H30 L42 735 L30 747.5 H8.5 Q6 747.5 6 745 V725 Q6 722.5 8.5 722.5 Z" fill="#1c1008" stroke="#f0922e" stroke-width="1.4"/><text x="23.50" y="739.30" font-size="12.5" fill="#f0922e" text-anchor="middle">M 1</text><text x="54.00" y="741.52" font-size="26.5" fill="#f0922e" textLength="39" lengthAdjust="spacingAndGlyphs">B_t</text><line x1="3" y1="962.5" x2="56" y2="962.5" stroke="#8a3ab0" stroke-width="1.2"/><path d="M8.5 949 H30 L42.5 962 L30 975 H8.5 Q6 975 6 972.5 V951.5 Q6 949 8.5 949 Z" fill="#7a2e9a"/><text x="23.50" y="966.47" font-size="13" fill="#ffffff" text-anchor="middle">M 2</text><text x="54" y="966.5" font-size="18.5" fill="#7a2e9a" textLength="24" lengthAdjust="spacingAndGlyphs">I_p</text><path d="M45 58 H65.5 L55.25 67.5 Z" fill="#f28c28"/><path d="M46 69 H64.5 V88 H59.5 L55.25 94.5 L51 88 H46 Z" fill="#000" stroke="#f28c28" stroke-width="2"/><path d="M50.8 75.6 H59.7 M55.25 75.6 V84" stroke="#f28c28" stroke-width="1.9" fill="none"/><path d="M1710 64.5 H1740.5 Q1744.5 64.5 1744.5 68.5 V98.75 Z" fill="#4f4f4f"/><circle cx="1737.5" cy="72" r="4.3" fill="none" stroke="#a8a8a8" stroke-width="1.6"/><line x1="1734.2" y1="75.6" x2="1728" y2="81.5" stroke="#a8a8a8" stroke-width="2.4" stroke-linecap="round"/><circle cx="1762" cy="504" r="1.9" fill="#c8c8c8"/><circle cx="1762" cy="512.2" r="1.9" fill="#c8c8c8"/><circle cx="1762" cy="520.6" r="1.9" fill="#c8c8c8"/></svg></body></html>
